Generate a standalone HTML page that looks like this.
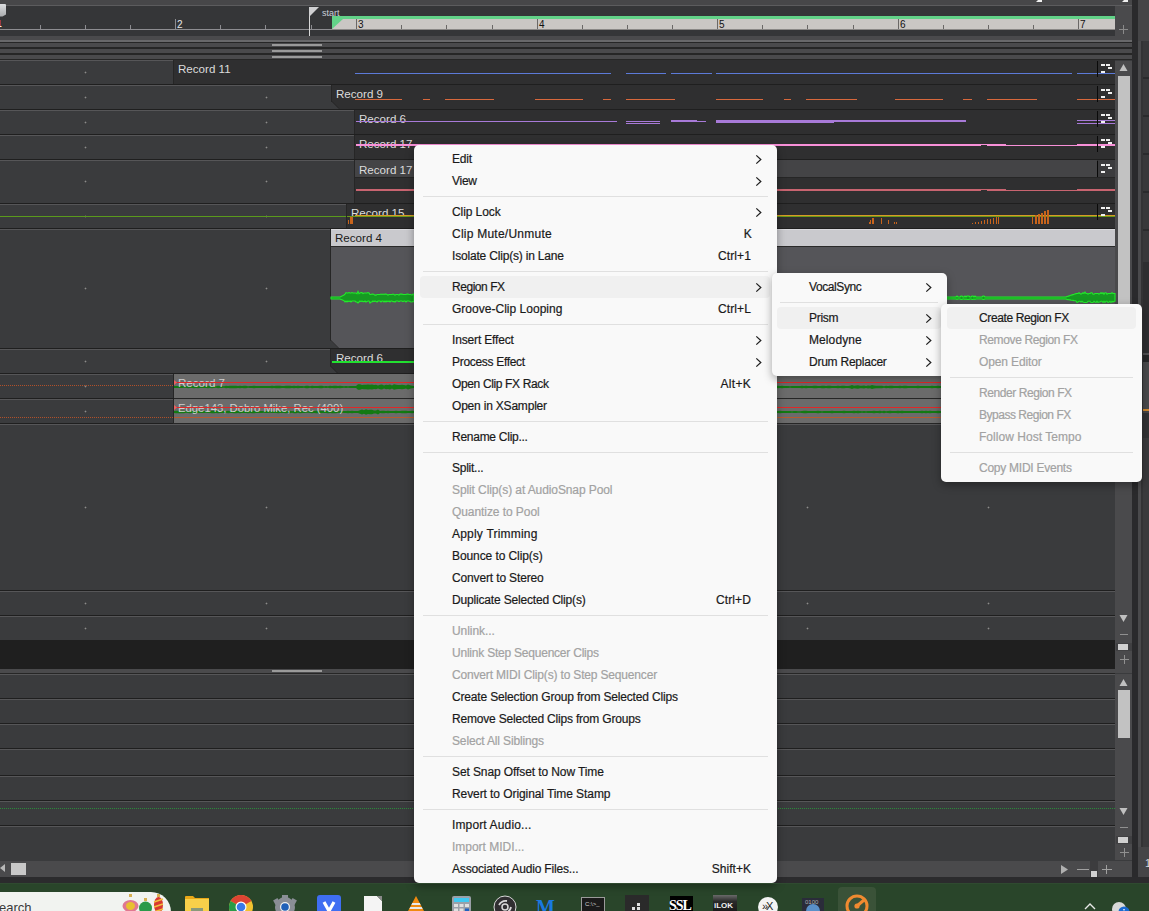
<!DOCTYPE html><html><head><meta charset="utf-8"><style>html,body{margin:0;padding:0;width:1149px;height:911px;overflow:hidden;background:#3a3b3d}body>div,body>span,body>svg{position:absolute}.t{position:absolute;font-family:"Liberation Sans",sans-serif;white-space:nowrap;line-height:1}.m{font-size:12px;letter-spacing:-0.17px;-webkit-text-stroke:0.2px currentColor}</style></head><body><div style="left:0px;top:0px;width:1149px;height:5px;background:#474749;"></div>
<div style="left:0px;top:5px;width:1132px;height:1px;background:#5c5c5e;"></div>
<div style="left:0px;top:6px;width:1115px;height:30px;background:#353638;"></div>
<div style="left:1115px;top:6px;width:17px;height:30px;background:#4a4a4c;"></div>
<div style="left:1119px;top:29px;width:9px;height:1px;background:#8a8a8a;"></div>
<div style="left:1123px;top:25px;width:1px;height:9px;background:#8a8a8a;"></div>
<div style="left:0px;top:29px;width:332px;height:1px;background:#8d8d91;"></div>
<div style="left:332px;top:16px;width:783px;height:3px;background:#62d288;"></div>
<div style="left:332px;top:19px;width:783px;height:10px;background:#cac7c4;"></div>
<div style="left:332px;top:29px;width:783px;height:1px;background:#8a8886;"></div>
<svg style="position:absolute;left:332px;top:19px" width="12" height="11"><polygon points="0,0 11,0 0,10" fill="#62d288"/></svg>
<div style="left:40px;top:25px;width:1px;height:4px;background:#8d8d91;"></div>
<div style="left:85px;top:25px;width:1px;height:4px;background:#8d8d91;"></div>
<div style="left:130px;top:25px;width:1px;height:4px;background:#8d8d91;"></div>
<div style="left:175px;top:19px;width:1px;height:10px;background:#8d8d91;"></div>
<div style="left:220px;top:25px;width:1px;height:4px;background:#8d8d91;"></div>
<div style="left:265px;top:25px;width:1px;height:4px;background:#8d8d91;"></div>
<div style="left:311px;top:25px;width:1px;height:4px;background:#8d8d91;"></div>
<span class="t" style="left:177px;top:19px;font-size:10px;color:#e8e8e8;line-height:12px">2</span>
<div style="left:356px;top:19px;width:1px;height:10px;background:#6a6866;"></div>
<div style="left:401px;top:25px;width:1px;height:4px;background:#6a6866;"></div>
<div style="left:446px;top:25px;width:1px;height:4px;background:#6a6866;"></div>
<div style="left:492px;top:25px;width:1px;height:4px;background:#6a6866;"></div>
<span class="t" style="left:358px;top:19px;font-size:10px;color:#111;line-height:12px">3</span>
<div style="left:537px;top:19px;width:1px;height:10px;background:#6a6866;"></div>
<div style="left:582px;top:25px;width:1px;height:4px;background:#6a6866;"></div>
<div style="left:627px;top:25px;width:1px;height:4px;background:#6a6866;"></div>
<div style="left:672px;top:25px;width:1px;height:4px;background:#6a6866;"></div>
<span class="t" style="left:539px;top:19px;font-size:10px;color:#111;line-height:12px">4</span>
<div style="left:717px;top:19px;width:1px;height:10px;background:#6a6866;"></div>
<div style="left:762px;top:25px;width:1px;height:4px;background:#6a6866;"></div>
<div style="left:807px;top:25px;width:1px;height:4px;background:#6a6866;"></div>
<div style="left:853px;top:25px;width:1px;height:4px;background:#6a6866;"></div>
<span class="t" style="left:719px;top:19px;font-size:10px;color:#111;line-height:12px">5</span>
<div style="left:898px;top:19px;width:1px;height:10px;background:#6a6866;"></div>
<div style="left:943px;top:25px;width:1px;height:4px;background:#6a6866;"></div>
<div style="left:988px;top:25px;width:1px;height:4px;background:#6a6866;"></div>
<div style="left:1033px;top:25px;width:1px;height:4px;background:#6a6866;"></div>
<span class="t" style="left:900px;top:19px;font-size:10px;color:#111;line-height:12px">6</span>
<div style="left:1078px;top:19px;width:1px;height:10px;background:#6a6866;"></div>
<span class="t" style="left:1080px;top:19px;font-size:10px;color:#111;line-height:12px">7</span>
<div style="left:0px;top:20px;width:1px;height:6px;background:#a03a40;"></div>
<div style="left:0px;top:26px;width:1px;height:1px;background:#f0f0f0;"></div>
<div style="left:1px;top:26px;width:1px;height:1px;background:#e89040;"></div>
<svg style="position:absolute;left:0;top:3px" width="8" height="16"><defs><linearGradient id="pg" x1="0" y1="0" x2="0" y2="1"><stop offset="0" stop-color="#dcdee0"/><stop offset="1" stop-color="#a9abae"/></linearGradient></defs><path d="M0 1 H5 Q6 1 6 2 V11.5 L2.5 13.5 H0 Z" fill="url(#pg)"/></svg>
<div style="left:309px;top:7px;width:1px;height:29px;background:#d8d8d8;"></div>
<svg style="position:absolute;left:309px;top:7px" width="12" height="11"><polygon points="0,0 10,0 0,10" fill="#d0d0d2"/></svg>
<span class="t" style="left:322px;top:8px;font-size:9px;color:#c9cfda;line-height:11px">start</span>
<div style="left:0px;top:36px;width:1132px;height:4px;background:#4a4a4c;"></div>
<div style="left:0px;top:40px;width:1132px;height:2px;background:#68686a;"></div>
<div style="left:0px;top:42px;width:1132px;height:1px;background:#262626;"></div>
<div style="left:0px;top:43px;width:1132px;height:4px;background:#4a4a4c;"></div>
<div style="left:0px;top:47px;width:1132px;height:2px;background:#262626;"></div>
<div style="left:0px;top:49px;width:1132px;height:4px;background:#4a4a4c;"></div>
<div style="left:0px;top:53px;width:1132px;height:2px;background:#262626;"></div>
<div style="left:0px;top:55px;width:1132px;height:4px;background:#4a4a4c;"></div>
<div style="left:0px;top:59px;width:1132px;height:1px;background:#262626;"></div>
<div style="left:0px;top:60px;width:1115px;height:1px;background:#565658;"></div>
<div style="left:272px;top:44px;width:50px;height:2px;background:#9a9a9a;"></div>
<div style="left:272px;top:50px;width:50px;height:2px;background:#9a9a9a;"></div>
<div style="left:272px;top:56px;width:50px;height:2px;background:#9a9a9a;"></div>
<div style="left:0px;top:61px;width:1115px;height:579px;background:#3a3b3d;"></div>
<div style="left:0px;top:84px;width:1115px;height:1px;background:#1f1f1f;"></div>
<div style="left:0px;top:85px;width:1115px;height:1px;background:#565658;"></div>
<div style="left:0px;top:109px;width:1115px;height:1px;background:#1f1f1f;"></div>
<div style="left:0px;top:110px;width:1115px;height:1px;background:#565658;"></div>
<div style="left:0px;top:134px;width:1115px;height:1px;background:#1f1f1f;"></div>
<div style="left:0px;top:135px;width:1115px;height:1px;background:#565658;"></div>
<div style="left:0px;top:159px;width:1115px;height:1px;background:#1f1f1f;"></div>
<div style="left:0px;top:160px;width:1115px;height:1px;background:#565658;"></div>
<div style="left:0px;top:203px;width:1115px;height:1px;background:#1f1f1f;"></div>
<div style="left:0px;top:204px;width:1115px;height:1px;background:#565658;"></div>
<div style="left:0px;top:228px;width:1115px;height:1px;background:#1f1f1f;"></div>
<div style="left:0px;top:229px;width:1115px;height:1px;background:#565658;"></div>
<div style="left:0px;top:348px;width:1115px;height:1px;background:#1f1f1f;"></div>
<div style="left:0px;top:349px;width:1115px;height:1px;background:#565658;"></div>
<div style="left:0px;top:373px;width:1115px;height:1px;background:#1f1f1f;"></div>
<div style="left:0px;top:374px;width:1115px;height:1px;background:#565658;"></div>
<div style="left:0px;top:398px;width:1115px;height:1px;background:#1f1f1f;"></div>
<div style="left:0px;top:399px;width:1115px;height:1px;background:#565658;"></div>
<div style="left:0px;top:423px;width:1115px;height:1px;background:#1f1f1f;"></div>
<div style="left:0px;top:424px;width:1115px;height:1px;background:#565658;"></div>
<div style="left:0px;top:590px;width:1115px;height:1px;background:#1f1f1f;"></div>
<div style="left:0px;top:591px;width:1115px;height:1px;background:#565658;"></div>
<div style="left:0px;top:615px;width:1115px;height:1px;background:#1f1f1f;"></div>
<div style="left:0px;top:616px;width:1115px;height:1px;background:#565658;"></div>
<div style="left:84px;top:72px;width:3px;height:1px;background:#555;"></div>
<div style="left:85px;top:71px;width:1px;height:3px;background:#555;"></div>
<div style="left:85px;top:72px;width:1px;height:1px;background:#8c8c8c;"></div>
<div style="left:265px;top:72px;width:3px;height:1px;background:#555;"></div>
<div style="left:266px;top:71px;width:1px;height:3px;background:#555;"></div>
<div style="left:266px;top:72px;width:1px;height:1px;background:#8c8c8c;"></div>
<div style="left:445px;top:72px;width:3px;height:1px;background:#555;"></div>
<div style="left:446px;top:71px;width:1px;height:3px;background:#555;"></div>
<div style="left:446px;top:72px;width:1px;height:1px;background:#8c8c8c;"></div>
<div style="left:626px;top:72px;width:3px;height:1px;background:#555;"></div>
<div style="left:627px;top:71px;width:1px;height:3px;background:#555;"></div>
<div style="left:627px;top:72px;width:1px;height:1px;background:#8c8c8c;"></div>
<div style="left:806px;top:72px;width:3px;height:1px;background:#555;"></div>
<div style="left:807px;top:71px;width:1px;height:3px;background:#555;"></div>
<div style="left:807px;top:72px;width:1px;height:1px;background:#8c8c8c;"></div>
<div style="left:987px;top:72px;width:3px;height:1px;background:#555;"></div>
<div style="left:988px;top:71px;width:1px;height:3px;background:#555;"></div>
<div style="left:988px;top:72px;width:1px;height:1px;background:#8c8c8c;"></div>
<div style="left:84px;top:97px;width:3px;height:1px;background:#555;"></div>
<div style="left:85px;top:96px;width:1px;height:3px;background:#555;"></div>
<div style="left:85px;top:97px;width:1px;height:1px;background:#8c8c8c;"></div>
<div style="left:265px;top:97px;width:3px;height:1px;background:#555;"></div>
<div style="left:266px;top:96px;width:1px;height:3px;background:#555;"></div>
<div style="left:266px;top:97px;width:1px;height:1px;background:#8c8c8c;"></div>
<div style="left:445px;top:97px;width:3px;height:1px;background:#555;"></div>
<div style="left:446px;top:96px;width:1px;height:3px;background:#555;"></div>
<div style="left:446px;top:97px;width:1px;height:1px;background:#8c8c8c;"></div>
<div style="left:626px;top:97px;width:3px;height:1px;background:#555;"></div>
<div style="left:627px;top:96px;width:1px;height:3px;background:#555;"></div>
<div style="left:627px;top:97px;width:1px;height:1px;background:#8c8c8c;"></div>
<div style="left:806px;top:97px;width:3px;height:1px;background:#555;"></div>
<div style="left:807px;top:96px;width:1px;height:3px;background:#555;"></div>
<div style="left:807px;top:97px;width:1px;height:1px;background:#8c8c8c;"></div>
<div style="left:987px;top:97px;width:3px;height:1px;background:#555;"></div>
<div style="left:988px;top:96px;width:1px;height:3px;background:#555;"></div>
<div style="left:988px;top:97px;width:1px;height:1px;background:#8c8c8c;"></div>
<div style="left:84px;top:122px;width:3px;height:1px;background:#555;"></div>
<div style="left:85px;top:121px;width:1px;height:3px;background:#555;"></div>
<div style="left:85px;top:122px;width:1px;height:1px;background:#8c8c8c;"></div>
<div style="left:265px;top:122px;width:3px;height:1px;background:#555;"></div>
<div style="left:266px;top:121px;width:1px;height:3px;background:#555;"></div>
<div style="left:266px;top:122px;width:1px;height:1px;background:#8c8c8c;"></div>
<div style="left:445px;top:122px;width:3px;height:1px;background:#555;"></div>
<div style="left:446px;top:121px;width:1px;height:3px;background:#555;"></div>
<div style="left:446px;top:122px;width:1px;height:1px;background:#8c8c8c;"></div>
<div style="left:626px;top:122px;width:3px;height:1px;background:#555;"></div>
<div style="left:627px;top:121px;width:1px;height:3px;background:#555;"></div>
<div style="left:627px;top:122px;width:1px;height:1px;background:#8c8c8c;"></div>
<div style="left:806px;top:122px;width:3px;height:1px;background:#555;"></div>
<div style="left:807px;top:121px;width:1px;height:3px;background:#555;"></div>
<div style="left:807px;top:122px;width:1px;height:1px;background:#8c8c8c;"></div>
<div style="left:987px;top:122px;width:3px;height:1px;background:#555;"></div>
<div style="left:988px;top:121px;width:1px;height:3px;background:#555;"></div>
<div style="left:988px;top:122px;width:1px;height:1px;background:#8c8c8c;"></div>
<div style="left:84px;top:147px;width:3px;height:1px;background:#555;"></div>
<div style="left:85px;top:146px;width:1px;height:3px;background:#555;"></div>
<div style="left:85px;top:147px;width:1px;height:1px;background:#8c8c8c;"></div>
<div style="left:265px;top:147px;width:3px;height:1px;background:#555;"></div>
<div style="left:266px;top:146px;width:1px;height:3px;background:#555;"></div>
<div style="left:266px;top:147px;width:1px;height:1px;background:#8c8c8c;"></div>
<div style="left:445px;top:147px;width:3px;height:1px;background:#555;"></div>
<div style="left:446px;top:146px;width:1px;height:3px;background:#555;"></div>
<div style="left:446px;top:147px;width:1px;height:1px;background:#8c8c8c;"></div>
<div style="left:626px;top:147px;width:3px;height:1px;background:#555;"></div>
<div style="left:627px;top:146px;width:1px;height:3px;background:#555;"></div>
<div style="left:627px;top:147px;width:1px;height:1px;background:#8c8c8c;"></div>
<div style="left:806px;top:147px;width:3px;height:1px;background:#555;"></div>
<div style="left:807px;top:146px;width:1px;height:3px;background:#555;"></div>
<div style="left:807px;top:147px;width:1px;height:1px;background:#8c8c8c;"></div>
<div style="left:987px;top:147px;width:3px;height:1px;background:#555;"></div>
<div style="left:988px;top:146px;width:1px;height:3px;background:#555;"></div>
<div style="left:988px;top:147px;width:1px;height:1px;background:#8c8c8c;"></div>
<div style="left:84px;top:181px;width:3px;height:1px;background:#555;"></div>
<div style="left:85px;top:180px;width:1px;height:3px;background:#555;"></div>
<div style="left:85px;top:181px;width:1px;height:1px;background:#8c8c8c;"></div>
<div style="left:265px;top:181px;width:3px;height:1px;background:#555;"></div>
<div style="left:266px;top:180px;width:1px;height:3px;background:#555;"></div>
<div style="left:266px;top:181px;width:1px;height:1px;background:#8c8c8c;"></div>
<div style="left:445px;top:181px;width:3px;height:1px;background:#555;"></div>
<div style="left:446px;top:180px;width:1px;height:3px;background:#555;"></div>
<div style="left:446px;top:181px;width:1px;height:1px;background:#8c8c8c;"></div>
<div style="left:626px;top:181px;width:3px;height:1px;background:#555;"></div>
<div style="left:627px;top:180px;width:1px;height:3px;background:#555;"></div>
<div style="left:627px;top:181px;width:1px;height:1px;background:#8c8c8c;"></div>
<div style="left:806px;top:181px;width:3px;height:1px;background:#555;"></div>
<div style="left:807px;top:180px;width:1px;height:3px;background:#555;"></div>
<div style="left:807px;top:181px;width:1px;height:1px;background:#8c8c8c;"></div>
<div style="left:987px;top:181px;width:3px;height:1px;background:#555;"></div>
<div style="left:988px;top:180px;width:1px;height:3px;background:#555;"></div>
<div style="left:988px;top:181px;width:1px;height:1px;background:#8c8c8c;"></div>
<div style="left:84px;top:216px;width:3px;height:1px;background:#555;"></div>
<div style="left:85px;top:215px;width:1px;height:3px;background:#555;"></div>
<div style="left:85px;top:216px;width:1px;height:1px;background:#8c8c8c;"></div>
<div style="left:265px;top:216px;width:3px;height:1px;background:#555;"></div>
<div style="left:266px;top:215px;width:1px;height:3px;background:#555;"></div>
<div style="left:266px;top:216px;width:1px;height:1px;background:#8c8c8c;"></div>
<div style="left:445px;top:216px;width:3px;height:1px;background:#555;"></div>
<div style="left:446px;top:215px;width:1px;height:3px;background:#555;"></div>
<div style="left:446px;top:216px;width:1px;height:1px;background:#8c8c8c;"></div>
<div style="left:626px;top:216px;width:3px;height:1px;background:#555;"></div>
<div style="left:627px;top:215px;width:1px;height:3px;background:#555;"></div>
<div style="left:627px;top:216px;width:1px;height:1px;background:#8c8c8c;"></div>
<div style="left:806px;top:216px;width:3px;height:1px;background:#555;"></div>
<div style="left:807px;top:215px;width:1px;height:3px;background:#555;"></div>
<div style="left:807px;top:216px;width:1px;height:1px;background:#8c8c8c;"></div>
<div style="left:987px;top:216px;width:3px;height:1px;background:#555;"></div>
<div style="left:988px;top:215px;width:1px;height:3px;background:#555;"></div>
<div style="left:988px;top:216px;width:1px;height:1px;background:#8c8c8c;"></div>
<div style="left:84px;top:288px;width:3px;height:1px;background:#555;"></div>
<div style="left:85px;top:287px;width:1px;height:3px;background:#555;"></div>
<div style="left:85px;top:288px;width:1px;height:1px;background:#8c8c8c;"></div>
<div style="left:265px;top:288px;width:3px;height:1px;background:#555;"></div>
<div style="left:266px;top:287px;width:1px;height:3px;background:#555;"></div>
<div style="left:266px;top:288px;width:1px;height:1px;background:#8c8c8c;"></div>
<div style="left:445px;top:288px;width:3px;height:1px;background:#555;"></div>
<div style="left:446px;top:287px;width:1px;height:3px;background:#555;"></div>
<div style="left:446px;top:288px;width:1px;height:1px;background:#8c8c8c;"></div>
<div style="left:626px;top:288px;width:3px;height:1px;background:#555;"></div>
<div style="left:627px;top:287px;width:1px;height:3px;background:#555;"></div>
<div style="left:627px;top:288px;width:1px;height:1px;background:#8c8c8c;"></div>
<div style="left:806px;top:288px;width:3px;height:1px;background:#555;"></div>
<div style="left:807px;top:287px;width:1px;height:3px;background:#555;"></div>
<div style="left:807px;top:288px;width:1px;height:1px;background:#8c8c8c;"></div>
<div style="left:987px;top:288px;width:3px;height:1px;background:#555;"></div>
<div style="left:988px;top:287px;width:1px;height:3px;background:#555;"></div>
<div style="left:988px;top:288px;width:1px;height:1px;background:#8c8c8c;"></div>
<div style="left:84px;top:361px;width:3px;height:1px;background:#555;"></div>
<div style="left:85px;top:360px;width:1px;height:3px;background:#555;"></div>
<div style="left:85px;top:361px;width:1px;height:1px;background:#8c8c8c;"></div>
<div style="left:265px;top:361px;width:3px;height:1px;background:#555;"></div>
<div style="left:266px;top:360px;width:1px;height:3px;background:#555;"></div>
<div style="left:266px;top:361px;width:1px;height:1px;background:#8c8c8c;"></div>
<div style="left:445px;top:361px;width:3px;height:1px;background:#555;"></div>
<div style="left:446px;top:360px;width:1px;height:3px;background:#555;"></div>
<div style="left:446px;top:361px;width:1px;height:1px;background:#8c8c8c;"></div>
<div style="left:626px;top:361px;width:3px;height:1px;background:#555;"></div>
<div style="left:627px;top:360px;width:1px;height:3px;background:#555;"></div>
<div style="left:627px;top:361px;width:1px;height:1px;background:#8c8c8c;"></div>
<div style="left:806px;top:361px;width:3px;height:1px;background:#555;"></div>
<div style="left:807px;top:360px;width:1px;height:3px;background:#555;"></div>
<div style="left:807px;top:361px;width:1px;height:1px;background:#8c8c8c;"></div>
<div style="left:987px;top:361px;width:3px;height:1px;background:#555;"></div>
<div style="left:988px;top:360px;width:1px;height:3px;background:#555;"></div>
<div style="left:988px;top:361px;width:1px;height:1px;background:#8c8c8c;"></div>
<div style="left:84px;top:386px;width:3px;height:1px;background:#555;"></div>
<div style="left:85px;top:385px;width:1px;height:3px;background:#555;"></div>
<div style="left:85px;top:386px;width:1px;height:1px;background:#8c8c8c;"></div>
<div style="left:265px;top:386px;width:3px;height:1px;background:#555;"></div>
<div style="left:266px;top:385px;width:1px;height:3px;background:#555;"></div>
<div style="left:266px;top:386px;width:1px;height:1px;background:#8c8c8c;"></div>
<div style="left:445px;top:386px;width:3px;height:1px;background:#555;"></div>
<div style="left:446px;top:385px;width:1px;height:3px;background:#555;"></div>
<div style="left:446px;top:386px;width:1px;height:1px;background:#8c8c8c;"></div>
<div style="left:626px;top:386px;width:3px;height:1px;background:#555;"></div>
<div style="left:627px;top:385px;width:1px;height:3px;background:#555;"></div>
<div style="left:627px;top:386px;width:1px;height:1px;background:#8c8c8c;"></div>
<div style="left:806px;top:386px;width:3px;height:1px;background:#555;"></div>
<div style="left:807px;top:385px;width:1px;height:3px;background:#555;"></div>
<div style="left:807px;top:386px;width:1px;height:1px;background:#8c8c8c;"></div>
<div style="left:987px;top:386px;width:3px;height:1px;background:#555;"></div>
<div style="left:988px;top:385px;width:1px;height:3px;background:#555;"></div>
<div style="left:988px;top:386px;width:1px;height:1px;background:#8c8c8c;"></div>
<div style="left:84px;top:411px;width:3px;height:1px;background:#555;"></div>
<div style="left:85px;top:410px;width:1px;height:3px;background:#555;"></div>
<div style="left:85px;top:411px;width:1px;height:1px;background:#8c8c8c;"></div>
<div style="left:265px;top:411px;width:3px;height:1px;background:#555;"></div>
<div style="left:266px;top:410px;width:1px;height:3px;background:#555;"></div>
<div style="left:266px;top:411px;width:1px;height:1px;background:#8c8c8c;"></div>
<div style="left:445px;top:411px;width:3px;height:1px;background:#555;"></div>
<div style="left:446px;top:410px;width:1px;height:3px;background:#555;"></div>
<div style="left:446px;top:411px;width:1px;height:1px;background:#8c8c8c;"></div>
<div style="left:626px;top:411px;width:3px;height:1px;background:#555;"></div>
<div style="left:627px;top:410px;width:1px;height:3px;background:#555;"></div>
<div style="left:627px;top:411px;width:1px;height:1px;background:#8c8c8c;"></div>
<div style="left:806px;top:411px;width:3px;height:1px;background:#555;"></div>
<div style="left:807px;top:410px;width:1px;height:3px;background:#555;"></div>
<div style="left:807px;top:411px;width:1px;height:1px;background:#8c8c8c;"></div>
<div style="left:987px;top:411px;width:3px;height:1px;background:#555;"></div>
<div style="left:988px;top:410px;width:1px;height:3px;background:#555;"></div>
<div style="left:988px;top:411px;width:1px;height:1px;background:#8c8c8c;"></div>
<div style="left:84px;top:507px;width:3px;height:1px;background:#555;"></div>
<div style="left:85px;top:506px;width:1px;height:3px;background:#555;"></div>
<div style="left:85px;top:507px;width:1px;height:1px;background:#8c8c8c;"></div>
<div style="left:265px;top:507px;width:3px;height:1px;background:#555;"></div>
<div style="left:266px;top:506px;width:1px;height:3px;background:#555;"></div>
<div style="left:266px;top:507px;width:1px;height:1px;background:#8c8c8c;"></div>
<div style="left:445px;top:507px;width:3px;height:1px;background:#555;"></div>
<div style="left:446px;top:506px;width:1px;height:3px;background:#555;"></div>
<div style="left:446px;top:507px;width:1px;height:1px;background:#8c8c8c;"></div>
<div style="left:626px;top:507px;width:3px;height:1px;background:#555;"></div>
<div style="left:627px;top:506px;width:1px;height:3px;background:#555;"></div>
<div style="left:627px;top:507px;width:1px;height:1px;background:#8c8c8c;"></div>
<div style="left:806px;top:507px;width:3px;height:1px;background:#555;"></div>
<div style="left:807px;top:506px;width:1px;height:3px;background:#555;"></div>
<div style="left:807px;top:507px;width:1px;height:1px;background:#8c8c8c;"></div>
<div style="left:987px;top:507px;width:3px;height:1px;background:#555;"></div>
<div style="left:988px;top:506px;width:1px;height:3px;background:#555;"></div>
<div style="left:988px;top:507px;width:1px;height:1px;background:#8c8c8c;"></div>
<div style="left:84px;top:603px;width:3px;height:1px;background:#555;"></div>
<div style="left:85px;top:602px;width:1px;height:3px;background:#555;"></div>
<div style="left:85px;top:603px;width:1px;height:1px;background:#8c8c8c;"></div>
<div style="left:265px;top:603px;width:3px;height:1px;background:#555;"></div>
<div style="left:266px;top:602px;width:1px;height:3px;background:#555;"></div>
<div style="left:266px;top:603px;width:1px;height:1px;background:#8c8c8c;"></div>
<div style="left:445px;top:603px;width:3px;height:1px;background:#555;"></div>
<div style="left:446px;top:602px;width:1px;height:3px;background:#555;"></div>
<div style="left:446px;top:603px;width:1px;height:1px;background:#8c8c8c;"></div>
<div style="left:626px;top:603px;width:3px;height:1px;background:#555;"></div>
<div style="left:627px;top:602px;width:1px;height:3px;background:#555;"></div>
<div style="left:627px;top:603px;width:1px;height:1px;background:#8c8c8c;"></div>
<div style="left:806px;top:603px;width:3px;height:1px;background:#555;"></div>
<div style="left:807px;top:602px;width:1px;height:3px;background:#555;"></div>
<div style="left:807px;top:603px;width:1px;height:1px;background:#8c8c8c;"></div>
<div style="left:987px;top:603px;width:3px;height:1px;background:#555;"></div>
<div style="left:988px;top:602px;width:1px;height:3px;background:#555;"></div>
<div style="left:988px;top:603px;width:1px;height:1px;background:#8c8c8c;"></div>
<div style="left:84px;top:628px;width:3px;height:1px;background:#555;"></div>
<div style="left:85px;top:627px;width:1px;height:3px;background:#555;"></div>
<div style="left:85px;top:628px;width:1px;height:1px;background:#8c8c8c;"></div>
<div style="left:265px;top:628px;width:3px;height:1px;background:#555;"></div>
<div style="left:266px;top:627px;width:1px;height:3px;background:#555;"></div>
<div style="left:266px;top:628px;width:1px;height:1px;background:#8c8c8c;"></div>
<div style="left:445px;top:628px;width:3px;height:1px;background:#555;"></div>
<div style="left:446px;top:627px;width:1px;height:3px;background:#555;"></div>
<div style="left:446px;top:628px;width:1px;height:1px;background:#8c8c8c;"></div>
<div style="left:626px;top:628px;width:3px;height:1px;background:#555;"></div>
<div style="left:627px;top:627px;width:1px;height:3px;background:#555;"></div>
<div style="left:627px;top:628px;width:1px;height:1px;background:#8c8c8c;"></div>
<div style="left:806px;top:628px;width:3px;height:1px;background:#555;"></div>
<div style="left:807px;top:627px;width:1px;height:3px;background:#555;"></div>
<div style="left:807px;top:628px;width:1px;height:1px;background:#8c8c8c;"></div>
<div style="left:987px;top:628px;width:3px;height:1px;background:#555;"></div>
<div style="left:988px;top:627px;width:1px;height:3px;background:#555;"></div>
<div style="left:988px;top:628px;width:1px;height:1px;background:#8c8c8c;"></div>
<div style="left:0px;top:640px;width:1115px;height:29px;background:#1f1f1f;"></div>
<div style="left:0px;top:669px;width:1132px;height:4px;background:#4a4a4c;"></div>
<div style="left:272px;top:670px;width:50px;height:2px;background:#9a9a9a;"></div>
<div style="left:0px;top:673px;width:1115px;height:1px;background:#262626;"></div>
<div style="left:0px;top:674px;width:1115px;height:1px;background:#565658;"></div>
<div style="left:0px;top:675px;width:1115px;height:186px;background:#3a3b3d;"></div>
<div style="left:0px;top:698px;width:1115px;height:1px;background:#1f1f1f;"></div>
<div style="left:0px;top:699px;width:1115px;height:1px;background:#565658;"></div>
<div style="left:0px;top:723px;width:1115px;height:1px;background:#1f1f1f;"></div>
<div style="left:0px;top:724px;width:1115px;height:1px;background:#565658;"></div>
<div style="left:0px;top:748px;width:1115px;height:1px;background:#1f1f1f;"></div>
<div style="left:0px;top:749px;width:1115px;height:1px;background:#565658;"></div>
<div style="left:0px;top:775px;width:1115px;height:1px;background:#1f1f1f;"></div>
<div style="left:0px;top:776px;width:1115px;height:1px;background:#565658;"></div>
<div style="left:0px;top:800px;width:1115px;height:1px;background:#1f1f1f;"></div>
<div style="left:0px;top:801px;width:1115px;height:1px;background:#565658;"></div>
<div style="left:0px;top:825px;width:1115px;height:1px;background:#1f1f1f;"></div>
<div style="left:0px;top:826px;width:1115px;height:1px;background:#565658;"></div>
<div style="left:0;top:808px;width:1115px;height:1px;background:repeating-linear-gradient(90deg,#2a8a3a 0 1px,transparent 1px 2px)"></div>
<div style="left:0px;top:861px;width:1115px;height:16px;background:#4a4a4c;"></div>
<div style="left:1115px;top:861px;width:17px;height:16px;background:#4a4a4c;"></div>
<svg style="position:absolute;left:0;top:863px" width="8" height="10"><polygon points="5,1 5,9 0,5" fill="#b8b8b8"/></svg>
<div style="left:11px;top:863px;width:15px;height:12px;background:#c8c8c8;"></div>
<svg style="position:absolute;left:1060px;top:864px" width="10" height="11"><polygon points="1,1 8,5.5 1,10" fill="#b0b0b0"/></svg>
<div style="left:1077px;top:869px;width:12px;height:1px;background:#a0a0a0;"></div>
<div style="left:1090px;top:861px;width:8px;height:16px;background:#3c3c3e;"></div>
<div style="left:1091px;top:871px;width:6px;height:6px;background:#d0d0d0;"></div>
<div style="left:1102px;top:869px;width:10px;height:1px;background:#a0a0a0;"></div>
<div style="left:1106px;top:865px;width:1px;height:9px;background:#a0a0a0;"></div>
<div style="left:0px;top:877px;width:1132px;height:6px;background:#2b2b2d;"></div>
<div style="left:1115px;top:61px;width:17px;height:608px;background:#4a4a4c;"></div>
<svg style="position:absolute;left:1117px;top:62px" width="13" height="10"><polygon points="6.5,2 10.5,9 2.5,9" fill="#c0c0c0"/></svg>
<div style="left:1118px;top:76px;width:12px;height:344px;background:#c2c2c2;"></div>
<svg style="position:absolute;left:1117px;top:613px" width="13" height="10"><polygon points="2.5,2 10.5,2 6.5,9" fill="#c0c0c0"/></svg>
<div style="left:1120px;top:634px;width:8px;height:1px;background:#909090;"></div>
<div style="left:1116px;top:643px;width:16px;height:8px;background:#404042;"></div>
<div style="left:1118px;top:644px;width:10px;height:6px;background:#d0d0d0;"></div>
<div style="left:1120px;top:659px;width:9px;height:1px;background:#909090;"></div>
<div style="left:1124px;top:655px;width:1px;height:9px;background:#909090;"></div>
<div style="left:1115px;top:674px;width:17px;height:186px;background:#4a4a4c;"></div>
<svg style="position:absolute;left:1117px;top:677px" width="13" height="10"><polygon points="6.5,2 10.5,9 2.5,9" fill="#c0c0c0"/></svg>
<div style="left:1118px;top:690px;width:12px;height:48px;background:#c2c2c2;"></div>
<svg style="position:absolute;left:1117px;top:806px" width="13" height="10"><polygon points="2.5,2 10.5,2 6.5,9" fill="#c0c0c0"/></svg>
<div style="left:1120px;top:827px;width:8px;height:1px;background:#909090;"></div>
<div style="left:1116px;top:836px;width:16px;height:8px;background:#404042;"></div>
<div style="left:1118px;top:837px;width:10px;height:6px;background:#d0d0d0;"></div>
<div style="left:1120px;top:852px;width:9px;height:1px;background:#909090;"></div>
<div style="left:1124px;top:848px;width:1px;height:9px;background:#909090;"></div>
<div style="left:1132px;top:0px;width:6px;height:883px;background:#2a2a2c;"></div>
<div style="left:1138px;top:0px;width:11px;height:883px;background:#454547;"></div>
<div style="left:1138px;top:41px;width:3px;height:806px;background:#4a4a4c;"></div>
<div style="left:1141px;top:41px;width:2px;height:806px;background:#333335;"></div>
<div style="left:1143px;top:41px;width:6px;height:221px;background:#38383a;"></div>
<div style="left:1143px;top:77px;width:6px;height:2px;background:#2a2a2c;"></div>
<div style="left:1143px;top:115px;width:6px;height:2px;background:#2a2a2c;"></div>
<div style="left:1143px;top:153px;width:6px;height:2px;background:#2a2a2c;"></div>
<div style="left:1143px;top:191px;width:6px;height:2px;background:#2a2a2c;"></div>
<div style="left:1143px;top:229px;width:6px;height:2px;background:#2a2a2c;"></div>
<div style="left:1143px;top:262px;width:6px;height:91px;background:#2e2e30;"></div>
<div style="left:1143px;top:353px;width:6px;height:2px;background:#505052;"></div>
<div style="left:1143px;top:355px;width:6px;height:7px;background:#262628;"></div>
<div style="left:1143px;top:362px;width:6px;height:48px;background:#4a4a4c;"></div>
<div style="left:1143px;top:409px;width:6px;height:2px;background:#d08a30;"></div>
<div style="left:1143px;top:413px;width:6px;height:25px;background:#323234;"></div>
<div style="left:1143px;top:438px;width:6px;height:409px;background:#3a3a3c;"></div>
<svg style="position:absolute;left:1036px;top:0" width="8" height="3"><polygon points="0,2 6,2 6,-4" fill="#f0f0f0"/></svg>
<svg style="position:absolute;left:1122px;top:0" width="8" height="3"><polygon points="0,2 6,2 6,-4" fill="#f0f0f0"/></svg>
<div style="left:0px;top:877px;width:1149px;height:6px;background:#2b2b2d;"></div>
<span class="t" style="left:1145px;top:857px;font-size:11px;color:#d0d8e0;line-height:12px">1</span>
<div style="left:0px;top:883px;width:1149px;height:28px;background:#29452a;"></div>
<div style="left:173px;top:60px;width:1px;height:24px;background:#262626;"></div>
<div style="left:174px;top:60px;width:941px;height:24px;background:#2f2f30;"></div>
<span class="t" style="left:178px;top:63.38px;font-size:11.6px;color:#dcdcdc;line-height:1">Record 11</span>
<div style="left:355px;top:73px;width:256px;height:1px;background:#5c7ad8;"></div>
<div style="left:626px;top:73px;width:40px;height:1px;background:#5c7ad8;"></div>
<div style="left:671px;top:73px;width:41px;height:1px;background:#5c7ad8;"></div>
<div style="left:716px;top:73px;width:356px;height:1px;background:#5c7ad8;"></div>
<div style="left:1077px;top:73px;width:38px;height:1px;background:#5c7ad8;"></div>
<div style="left:1097px;top:61px;width:1px;height:16px;background:#0a0a0a;"></div>
<div style="left:1101px;top:64px;width:4px;height:2px;background:#f0f0f0;"></div>
<div style="left:1106px;top:64px;width:4px;height:2px;background:#f0f0f0;"></div>
<div style="left:1108px;top:67px;width:4px;height:2px;background:#f0f0f0;"></div>
<div style="left:1101px;top:71px;width:4px;height:2px;background:#f0f0f0;"></div>
<div style="left:331px;top:85px;width:784px;height:24px;background:#2f2f30;"></div>
<svg style="position:absolute;left:331px;top:101px" width="9" height="9"><polygon points="0,0 0,8 8,8" fill="#3a3b3d"/><line x1="0.5" y1="0" x2="8" y2="7.5" stroke="#262626" stroke-width="1"/></svg>
<div style="left:331px;top:85px;width:1px;height:17px;background:#262626;"></div>
<span class="t" style="left:336px;top:88.38px;font-size:11.6px;color:#dcdcdc;line-height:1">Record 9</span>
<div style="left:355px;top:99px;width:47px;height:1px;background:#d8683c;"></div>
<div style="left:423px;top:99px;width:7px;height:1px;background:#d8683c;"></div>
<div style="left:445px;top:99px;width:49px;height:1px;background:#d8683c;"></div>
<div style="left:535px;top:99px;width:48px;height:1px;background:#d8683c;"></div>
<div style="left:603px;top:99px;width:8px;height:1px;background:#d8683c;"></div>
<div style="left:626px;top:99px;width:49px;height:1px;background:#d8683c;"></div>
<div style="left:716px;top:99px;width:47px;height:1px;background:#d8683c;"></div>
<div style="left:784px;top:99px;width:7px;height:1px;background:#d8683c;"></div>
<div style="left:806px;top:99px;width:51px;height:1px;background:#d8683c;"></div>
<div style="left:895px;top:99px;width:48px;height:1px;background:#d8683c;"></div>
<div style="left:963px;top:99px;width:9px;height:1px;background:#d8683c;"></div>
<div style="left:987px;top:99px;width:50px;height:1px;background:#d8683c;"></div>
<div style="left:1077px;top:99px;width:38px;height:1px;background:#d8683c;"></div>
<div style="left:1097px;top:86px;width:1px;height:16px;background:#0a0a0a;"></div>
<div style="left:1101px;top:89px;width:4px;height:2px;background:#f0f0f0;"></div>
<div style="left:1106px;top:89px;width:4px;height:2px;background:#f0f0f0;"></div>
<div style="left:1108px;top:92px;width:4px;height:2px;background:#f0f0f0;"></div>
<div style="left:1101px;top:96px;width:4px;height:2px;background:#f0f0f0;"></div>
<div style="left:354px;top:110px;width:1px;height:24px;background:#262626;"></div>
<div style="left:355px;top:110px;width:760px;height:24px;background:#2f2f30;"></div>
<span class="t" style="left:359px;top:113.38px;font-size:11.6px;color:#dcdcdc;line-height:1">Record 6</span>
<div style="left:356px;top:121px;width:261px;height:1px;background:#a87ad8;"></div>
<div style="left:671px;top:121px;width:35px;height:1px;background:#a87ad8;"></div>
<div style="left:834px;top:120px;width:132px;height:2px;background:#a87ad8;"></div>
<div style="left:671px;top:120px;width:26px;height:2px;background:#a87ad8;"></div>
<div style="left:626px;top:121px;width:34px;height:1px;background:#a87ad8;"></div>
<div style="left:626px;top:123px;width:34px;height:1px;background:#a87ad8;"></div>
<div style="left:716px;top:120px;width:118px;height:3px;background:#a87ad8;"></div>
<div style="left:1077px;top:120px;width:38px;height:1px;background:#a87ad8;"></div>
<div style="left:1077px;top:123px;width:38px;height:1px;background:#a87ad8;"></div>
<div style="left:1097px;top:111px;width:1px;height:16px;background:#0a0a0a;"></div>
<div style="left:1101px;top:114px;width:4px;height:2px;background:#f0f0f0;"></div>
<div style="left:1106px;top:114px;width:4px;height:2px;background:#f0f0f0;"></div>
<div style="left:1108px;top:117px;width:4px;height:2px;background:#f0f0f0;"></div>
<div style="left:1101px;top:121px;width:4px;height:2px;background:#f0f0f0;"></div>
<div style="left:354px;top:135px;width:1px;height:24px;background:#262626;"></div>
<div style="left:355px;top:135px;width:760px;height:24px;background:#2f2f30;"></div>
<span class="t" style="left:359px;top:138.38px;font-size:11.6px;color:#dcdcdc;line-height:1">Record 17</span>
<div style="left:356px;top:144px;width:759px;height:2px;background:#f890d8;"></div>
<div style="left:1006px;top:144px;width:71px;height:1px;background:#2f2f30;"></div>
<div style="left:981px;top:145px;width:6px;height:1px;background:#2f2f30;"></div>
<div style="left:1097px;top:136px;width:1px;height:16px;background:#0a0a0a;"></div>
<div style="left:1101px;top:139px;width:4px;height:2px;background:#f0f0f0;"></div>
<div style="left:1106px;top:139px;width:4px;height:2px;background:#f0f0f0;"></div>
<div style="left:1108px;top:142px;width:4px;height:2px;background:#f0f0f0;"></div>
<div style="left:1101px;top:146px;width:4px;height:2px;background:#f0f0f0;"></div>
<div style="left:354px;top:160px;width:1px;height:43px;background:#262626;"></div>
<div style="left:355px;top:160px;width:760px;height:43px;background:#2f2f30;"></div>
<div style="left:355px;top:160px;width:742px;height:17px;background:#444446;"></div>
<div style="left:1098px;top:160px;width:17px;height:17px;background:#3c3c3e;"></div>
<div style="left:355px;top:177px;width:760px;height:1px;background:#262626;"></div>
<span class="t" style="left:359px;top:163.68px;font-size:11.6px;color:#dcdcdc;line-height:1">Record 17</span>
<div style="left:356px;top:189px;width:759px;height:2px;background:#c86470;"></div>
<div style="left:1006px;top:189px;width:71px;height:1px;background:#2f2f30;"></div>
<div style="left:981px;top:190px;width:6px;height:1px;background:#2f2f30;"></div>
<div style="left:1097px;top:161px;width:1px;height:16px;background:#0a0a0a;"></div>
<div style="left:1101px;top:164px;width:4px;height:2px;background:#f0f0f0;"></div>
<div style="left:1106px;top:164px;width:4px;height:2px;background:#f0f0f0;"></div>
<div style="left:1108px;top:167px;width:4px;height:2px;background:#f0f0f0;"></div>
<div style="left:1101px;top:171px;width:4px;height:2px;background:#f0f0f0;"></div>
<div style="left:346px;top:204px;width:1px;height:24px;background:#262626;"></div>
<div style="left:347px;top:204px;width:768px;height:24px;background:#2f2f30;"></div>
<div style="left:0px;top:216px;width:346px;height:1px;background:#5a9a1c;"></div>
<span class="t" style="left:351px;top:207.38px;font-size:11.6px;color:#dcdcdc;line-height:1">Record 15</span>
<div style="left:355px;top:215px;width:760px;height:1px;background:#d89a28;"></div>
<div style="left:347px;top:216px;width:768px;height:1px;background:#6a9a18;"></div>
<div style="left:348px;top:220px;width:1px;height:4px;background:#c8641c;"></div>
<div style="left:350px;top:217px;width:1px;height:7px;background:#c8641c;"></div>
<div style="left:351px;top:217px;width:1px;height:7px;background:#c8641c;"></div>
<div style="left:352px;top:217px;width:1px;height:7px;background:#c8641c;"></div>
<div style="left:869px;top:222px;width:1px;height:2px;background:#c8641c;"></div>
<div style="left:870px;top:220px;width:1px;height:4px;background:#c8641c;"></div>
<div style="left:872px;top:218px;width:1px;height:6px;background:#c8641c;"></div>
<div style="left:873px;top:218px;width:1px;height:6px;background:#c8641c;"></div>
<div style="left:881px;top:218px;width:1px;height:6px;background:#c8641c;"></div>
<div style="left:888px;top:220px;width:1px;height:4px;background:#c8641c;"></div>
<div style="left:894px;top:222px;width:1px;height:2px;background:#c8641c;"></div>
<div style="left:896px;top:222px;width:1px;height:2px;background:#c8641c;"></div>
<div style="left:972px;top:223px;width:1px;height:1px;background:#c8641c;"></div>
<div style="left:975px;top:222px;width:1px;height:2px;background:#c8641c;"></div>
<div style="left:978px;top:222px;width:1px;height:2px;background:#c8641c;"></div>
<div style="left:981px;top:221px;width:1px;height:3px;background:#c8641c;"></div>
<div style="left:984px;top:220px;width:1px;height:4px;background:#c8641c;"></div>
<div style="left:987px;top:219px;width:1px;height:5px;background:#c8641c;"></div>
<div style="left:990px;top:219px;width:1px;height:5px;background:#c8641c;"></div>
<div style="left:993px;top:218px;width:1px;height:6px;background:#c8641c;"></div>
<div style="left:996px;top:217px;width:1px;height:7px;background:#c8641c;"></div>
<div style="left:998px;top:217px;width:1px;height:7px;background:#c8641c;"></div>
<div style="left:1032px;top:217px;width:1px;height:7px;background:#c8641c;"></div>
<div style="left:1035px;top:215px;width:2px;height:9px;background:#c8641c;"></div>
<div style="left:1038px;top:214px;width:2px;height:10px;background:#c8641c;"></div>
<div style="left:1041px;top:213px;width:2px;height:11px;background:#c8641c;"></div>
<div style="left:1044px;top:211px;width:2px;height:13px;background:#c8641c;"></div>
<div style="left:1047px;top:210px;width:2px;height:14px;background:#c8641c;"></div>
<div style="left:1097px;top:204px;width:1px;height:16px;background:#0a0a0a;"></div>
<div style="left:1101px;top:207px;width:4px;height:2px;background:#f0f0f0;"></div>
<div style="left:1106px;top:207px;width:4px;height:2px;background:#f0f0f0;"></div>
<div style="left:1108px;top:210px;width:4px;height:2px;background:#f0f0f0;"></div>
<div style="left:1101px;top:214px;width:4px;height:2px;background:#f0f0f0;"></div>
<div style="left:330px;top:229px;width:1px;height:119px;background:#262626;"></div>
<div style="left:331px;top:229px;width:784px;height:17px;background:#c9c9cd;"></div>
<div style="left:331px;top:229px;width:784px;height:1px;background:#dadade;"></div>
<div style="left:331px;top:247px;width:784px;height:101px;background:#555559;"></div>
<div style="left:331px;top:246px;width:784px;height:1px;background:#2a2a2a;"></div>
<svg style="position:absolute;left:330px;top:340px" width="10" height="9"><polygon points="0,0 0,8 8,8" fill="#3a3b3d"/><line x1="0.5" y1="0" x2="8.5" y2="8" stroke="#262626" stroke-width="1"/></svg>
<span class="t" style="left:335px;top:232.38px;font-size:11.6px;color:#1a1a1a;line-height:1">Record 4</span>
<svg style="position:absolute;left:0;top:0" width="1149" height="911"><path d="M331,297.0 L332,297.0 L333,297.0 L334,297.0 L335,297.0 L336,297.0 L337,297.0 L338,297.0 L339,297.0 L340,297.0 L341,296.5 L342,296.0 L343,295.5 L344,295.0 L345,294.1 L346,292.6 L347,293.0 L348,293.0 L349,292.6 L350,293.0 L351,293.0 L352,292.6 L353,293.0 L354,293.0 L355,293.0 L356,293.0 L357,293.6 L358,291.3 L359,293.6 L360,293.0 L361,292.6 L362,292.6 L363,293.6 L364,293.0 L365,293.0 L366,293.0 L367,293.0 L368,292.6 L369,293.0 L370,294.5 L371,294.5 L372,294.1 L373,294.1 L374,294.5 L375,295.1 L376,295.1 L377,294.5 L378,294.5 L379,294.5 L380,294.5 L381,294.1 L382,294.5 L383,294.1 L384,294.5 L385,294.1 L386,294.1 L387,294.5 L388,295.1 L389,294.5 L390,294.5 L391,294.5 L392,294.5 L393,294.1 L394,294.5 L395,295.1 L396,294.5 L397,294.5 L398,294.5 L399,295.1 L400,294.1 L401,294.1 L402,294.1 L403,294.5 L404,294.5 L405,294.5 L406,294.5 L407,294.1 L408,294.1 L409,294.5 L410,294.5 L411,294.5 L412,295.1 L413,294.1 L414,294.1 L414,301.6 L413,301.6 L412,302.0 L411,302.0 L410,301.6 L409,301.0 L408,301.0 L407,301.0 L406,302.0 L405,301.0 L404,301.0 L403,301.6 L402,301.0 L401,301.0 L400,301.0 L399,301.6 L398,301.0 L397,301.0 L396,301.0 L395,302.0 L394,301.6 L393,301.6 L392,301.0 L391,301.0 L390,302.0 L389,301.0 L388,301.6 L387,301.0 L386,302.0 L385,301.0 L384,302.0 L383,301.0 L382,301.0 L381,302.0 L380,301.0 L379,301.0 L378,301.0 L377,302.0 L376,301.6 L375,301.0 L374,301.6 L373,301.0 L372,302.0 L371,302.0 L370,303.0 L369,301.0 L368,301.0 L367,301.6 L366,302.0 L365,301.0 L364,301.6 L363,301.6 L362,301.0 L361,301.6 L360,301.0 L359,302.0 L358,303.0 L357,302.0 L356,302.0 L355,301.0 L354,301.0 L353,301.0 L352,301.0 L351,302.0 L350,301.0 L349,301.6 L348,301.0 L347,302.0 L346,301.0 L345,302.0 L344,300.6 L343,300.2 L342,299.8 L341,299.4 L340,299.0 L339,299.0 L338,299.0 L337,299.0 L336,299.0 L335,299.0 L334,299.0 L333,299.0 L332,299.0 L331,299.0 ZM946,297.0 L947,297.0 L948,297.0 L949,297.0 L950,297.0 L951,297.0 L952,297.0 L953,297.0 L954,297.0 L955,297.0 L956,297.0 L957,296.0 L958,297.0 L959,297.0 L960,297.0 L961,296.0 L962,296.0 L963,297.0 L964,297.0 L965,296.0 L966,297.0 L967,296.0 L968,296.0 L969,296.0 L970,297.0 L971,297.0 L972,296.0 L973,296.0 L974,297.0 L975,296.0 L976,297.0 L977,297.0 L978,297.0 L979,297.0 L980,297.0 L981,297.0 L982,297.0 L983,296.0 L984,296.0 L985,297.0 L986,297.0 L987,297.0 L988,297.0 L989,297.0 L990,297.0 L991,297.0 L992,297.0 L993,297.0 L994,297.0 L995,297.0 L996,297.0 L997,297.0 L998,297.0 L999,297.0 L1000,297.0 L1001,297.0 L1002,297.0 L1003,297.0 L1004,297.0 L1005,297.0 L1006,297.0 L1007,297.0 L1008,297.0 L1009,297.0 L1010,297.0 L1011,297.0 L1012,297.0 L1013,297.0 L1014,297.0 L1015,297.0 L1016,297.0 L1017,297.0 L1018,297.0 L1019,297.0 L1020,297.0 L1021,297.0 L1022,297.0 L1023,297.0 L1024,297.0 L1025,297.0 L1026,297.0 L1027,297.0 L1028,297.0 L1029,297.0 L1030,297.0 L1031,297.0 L1032,297.0 L1033,297.0 L1034,297.0 L1035,297.0 L1036,297.0 L1037,297.0 L1038,297.0 L1039,297.0 L1040,297.0 L1041,297.0 L1042,297.0 L1043,297.0 L1044,297.0 L1045,297.0 L1046,297.0 L1047,297.0 L1048,297.0 L1049,297.0 L1050,297.0 L1051,297.0 L1052,297.0 L1053,297.0 L1054,297.0 L1055,297.0 L1056,297.0 L1057,297.0 L1058,297.0 L1059,297.0 L1060,297.0 L1061,297.0 L1062,297.0 L1063,297.0 L1064,297.0 L1065,297.0 L1066,297.0 L1067,296.5 L1068,296.2 L1069,295.9 L1070,295.5 L1071,295.2 L1072,294.9 L1073,294.6 L1074,294.3 L1075,293.9 L1076,293.6 L1077,293.5 L1078,293.5 L1079,292.7 L1080,293.5 L1081,294.2 L1082,293.5 L1083,292.7 L1084,293.5 L1085,292.0 L1086,293.5 L1087,293.5 L1088,294.2 L1089,293.5 L1090,293.5 L1091,292.7 L1092,292.7 L1093,294.2 L1094,294.2 L1095,293.5 L1096,293.5 L1097,293.5 L1098,293.5 L1099,294.2 L1100,293.5 L1101,292.7 L1102,293.5 L1103,292.7 L1104,294.2 L1105,292.7 L1106,292.7 L1107,294.2 L1108,293.5 L1109,293.5 L1110,293.5 L1111,293.5 L1112,292.7 L1113,293.5 L1114,293.5 L1115,293.5 L1115,301.2 L1114,301.2 L1113,302.0 L1112,301.2 L1111,302.5 L1110,301.2 L1109,302.0 L1108,302.5 L1107,301.2 L1106,301.2 L1105,302.5 L1104,301.2 L1103,302.5 L1102,301.2 L1101,301.2 L1100,302.0 L1099,302.0 L1098,302.5 L1097,301.2 L1096,302.5 L1095,302.0 L1094,301.2 L1093,302.5 L1092,302.5 L1091,302.5 L1090,301.2 L1089,301.2 L1088,301.2 L1087,302.5 L1086,302.5 L1085,302.5 L1084,302.5 L1083,302.0 L1082,301.2 L1081,302.0 L1080,301.2 L1079,301.2 L1078,302.0 L1077,302.5 L1076,300.9 L1075,300.7 L1074,300.6 L1073,300.4 L1072,300.2 L1071,300.1 L1070,299.9 L1069,299.8 L1068,299.6 L1067,299.5 L1066,299.0 L1065,299.0 L1064,299.0 L1063,299.0 L1062,299.0 L1061,299.0 L1060,299.0 L1059,299.0 L1058,299.0 L1057,299.0 L1056,299.0 L1055,299.0 L1054,299.0 L1053,299.0 L1052,299.0 L1051,299.0 L1050,299.0 L1049,299.0 L1048,299.0 L1047,299.0 L1046,299.0 L1045,299.0 L1044,299.0 L1043,299.0 L1042,299.0 L1041,299.0 L1040,299.0 L1039,299.0 L1038,299.0 L1037,299.0 L1036,299.0 L1035,299.0 L1034,299.0 L1033,299.0 L1032,299.0 L1031,299.0 L1030,299.0 L1029,299.0 L1028,299.0 L1027,299.0 L1026,299.0 L1025,299.0 L1024,299.0 L1023,299.0 L1022,299.0 L1021,299.0 L1020,299.0 L1019,299.0 L1018,299.0 L1017,299.0 L1016,299.0 L1015,299.0 L1014,299.0 L1013,299.0 L1012,299.0 L1011,299.0 L1010,299.0 L1009,299.0 L1008,299.0 L1007,299.0 L1006,299.0 L1005,299.0 L1004,299.0 L1003,299.0 L1002,299.0 L1001,299.0 L1000,299.0 L999,299.0 L998,299.0 L997,299.0 L996,299.0 L995,299.0 L994,299.0 L993,299.0 L992,299.0 L991,299.0 L990,299.0 L989,299.0 L988,299.0 L987,299.0 L986,299.0 L985,299.0 L984,299.5 L983,299.5 L982,299.0 L981,299.0 L980,299.0 L979,299.0 L978,299.0 L977,299.0 L976,299.0 L975,299.5 L974,299.0 L973,299.5 L972,299.5 L971,299.0 L970,299.0 L969,299.5 L968,299.5 L967,299.5 L966,299.0 L965,299.5 L964,299.0 L963,299.0 L962,299.5 L961,299.5 L960,299.0 L959,299.0 L958,299.0 L957,299.5 L956,299.0 L955,299.0 L954,299.0 L953,299.0 L952,299.0 L951,299.0 L950,299.0 L949,299.0 L948,299.0 L947,299.0 L946,299.0 Z" fill="#169a22" stroke="#22ea2a" stroke-width="1.1"/></svg>
<div style="left:330px;top:349px;width:1px;height:24px;background:#262626;"></div>
<div style="left:331px;top:349px;width:784px;height:24px;background:#2f2f30;"></div>
<svg style="position:absolute;left:330px;top:366px" width="10" height="8"><polygon points="0,0 0,7 7,7" fill="#3a3b3d"/><line x1="0.5" y1="0" x2="7.5" y2="7" stroke="#262626" stroke-width="1"/></svg>
<span class="t" style="left:336px;top:351.88px;font-size:11.6px;color:#dcdcdc;line-height:1">Record 6</span>
<div style="left:332px;top:361px;width:783px;height:2px;background:#22e030;"></div>
<div style="left:0px;top:385px;width:173px;height:1px;background:transparent;background:repeating-linear-gradient(90deg,#b0502a 0 1px,transparent 1px 2px)"></div>
<div style="left:173px;top:374px;width:1px;height:24px;background:#262626;"></div>
<div style="left:174px;top:374px;width:941px;height:24px;background:#6b6b6b;"></div>
<div style="left:0px;top:417px;width:173px;height:1px;background:transparent;background:repeating-linear-gradient(90deg,#b0502a 0 1px,transparent 1px 2px)"></div>
<div style="left:173px;top:399px;width:1px;height:24px;background:#262626;"></div>
<div style="left:174px;top:399px;width:941px;height:24px;background:#6b6b6b;"></div>
<div style="left:174px;top:398px;width:941px;height:1px;background:#262626;"></div>
<div style="left:173px;top:423px;width:942px;height:1px;background:#262626;"></div>
<svg style="position:absolute;left:0;top:0" width="1149" height="911"><path d="M174,386.1 L176,385.9 L178,386.0 L180,385.9 L182,385.9 L184,386.2 L186,386.2 L188,385.8 L190,386.1 L192,386.1 L194,385.7 L196,386.0 L198,385.8 L200,386.0 L202,385.9 L204,386.1 L206,385.9 L208,385.8 L210,385.9 L212,385.8 L214,385.9 L216,386.2 L218,385.8 L220,385.9 L222,386.0 L224,386.2 L226,385.8 L228,386.0 L230,385.8 L232,385.8 L234,385.8 L236,385.7 L238,386.0 L240,385.8 L242,386.0 L244,385.7 L246,385.8 L248,386.2 L250,386.1 L252,386.1 L254,385.7 L256,386.0 L258,385.9 L260,386.0 L262,385.9 L264,386.0 L266,386.0 L268,385.9 L270,385.9 L272,385.7 L274,385.9 L276,385.7 L278,385.8 L280,385.7 L282,385.9 L284,386.1 L286,385.8 L288,385.7 L290,385.7 L292,385.9 L294,385.8 L296,386.1 L298,385.8 L300,385.9 L302,386.1 L304,386.2 L306,385.8 L308,385.7 L310,386.2 L312,385.8 L314,386.0 L316,386.1 L318,386.1 L320,385.8 L322,385.8 L324,386.2 L326,385.9 L328,386.2 L330,385.8 L332,386.0 L334,385.8 L336,385.7 L338,385.9 L340,385.7 L342,386.0 L344,386.2 L346,385.9 L348,386.2 L350,386.1 L352,386.0 L354,385.9 L356,386.1 L358,384.3 L360,384.2 L362,384.9 L364,384.8 L366,384.7 L368,384.6 L370,384.8 L372,384.5 L374,385.0 L376,384.8 L378,385.4 L380,384.7 L382,384.6 L384,385.4 L386,384.8 L388,385.0 L390,384.5 L392,385.4 L394,384.2 L396,384.8 L398,385.0 L400,385.0 L402,384.7 L404,384.9 L406,385.4 L408,384.5 L410,385.2 L412,385.8 L414,386.1 L416,386.1 L418,386.0 L420,385.9 L422,386.1 L424,386.0 L426,386.0 L428,385.8 L430,386.0 L432,385.8 L434,386.1 L436,386.0 L438,385.9 L440,385.8 L442,386.0 L444,386.1 L446,386.1 L448,385.9 L450,386.1 L452,385.8 L454,385.8 L456,386.1 L458,386.1 L460,385.8 L462,385.9 L464,385.8 L466,386.0 L468,386.1 L470,386.1 L472,385.8 L474,386.1 L476,386.0 L478,386.0 L480,386.0 L482,386.0 L484,385.7 L486,386.1 L488,386.2 L490,385.7 L492,385.8 L494,385.7 L496,386.0 L498,385.7 L500,385.7 L502,386.1 L504,385.8 L506,385.8 L508,385.9 L510,385.9 L512,386.1 L514,386.0 L516,386.1 L518,386.2 L520,385.9 L522,386.1 L524,385.8 L526,386.2 L528,385.7 L530,385.9 L532,385.7 L534,385.8 L536,385.8 L538,385.9 L540,386.2 L542,385.8 L544,386.1 L546,386.1 L548,385.9 L550,385.9 L552,386.0 L554,385.7 L556,385.9 L558,386.0 L560,386.1 L562,385.8 L564,386.0 L566,385.8 L568,386.0 L570,386.1 L572,385.9 L574,385.8 L576,385.0 L578,385.0 L580,385.8 L582,384.9 L584,385.5 L586,385.3 L588,385.3 L590,385.8 L592,385.7 L594,385.7 L596,385.7 L598,385.8 L600,386.2 L602,385.9 L604,386.0 L606,386.0 L608,386.0 L610,385.9 L612,385.9 L614,386.0 L616,386.1 L618,386.0 L620,386.1 L622,385.9 L624,385.8 L626,386.0 L628,386.2 L630,386.1 L632,386.0 L634,385.9 L636,385.8 L638,386.0 L640,385.0 L642,385.3 L644,384.9 L646,384.9 L648,385.4 L650,384.9 L652,385.2 L654,384.7 L656,385.3 L658,384.8 L660,385.2 L662,384.8 L664,384.7 L666,384.9 L668,385.1 L670,385.0 L672,385.5 L674,385.6 L676,385.6 L678,385.5 L680,384.8 L682,384.8 L684,384.8 L686,385.0 L688,385.6 L690,385.1 L692,385.6 L694,384.7 L696,385.3 L698,384.8 L700,386.1 L702,386.1 L704,386.1 L706,385.9 L708,385.8 L710,386.0 L712,386.0 L714,386.0 L716,386.0 L718,386.0 L720,386.2 L722,385.9 L724,385.7 L726,386.0 L728,385.8 L730,386.1 L732,385.9 L734,385.8 L736,385.9 L738,385.9 L740,386.0 L742,385.9 L744,385.8 L746,386.1 L748,386.2 L750,385.8 L752,385.7 L754,385.9 L756,386.0 L758,385.8 L760,386.1 L762,386.1 L764,386.1 L766,385.9 L768,386.0 L770,386.1 L772,385.9 L774,385.7 L776,386.1 L778,385.8 L780,386.0 L782,385.8 L784,385.9 L786,386.1 L788,386.1 L790,386.2 L792,386.0 L794,386.0 L796,386.1 L798,386.0 L800,386.0 L802,385.8 L804,386.1 L806,385.7 L808,386.0 L810,385.9 L812,386.0 L814,385.8 L816,385.8 L818,385.9 L820,386.0 L822,385.8 L824,385.8 L826,386.0 L828,385.8 L830,385.7 L832,386.0 L834,386.1 L836,386.1 L838,385.8 L840,385.9 L842,385.7 L844,385.8 L846,386.1 L848,386.1 L850,385.8 L852,385.1 L854,385.7 L856,385.6 L858,385.3 L860,385.8 L862,385.7 L864,385.4 L866,385.9 L868,385.5 L870,385.7 L872,385.1 L874,385.4 L876,385.7 L878,385.8 L880,385.8 L882,385.7 L884,386.2 L886,385.7 L888,386.0 L890,385.8 L892,385.8 L894,386.1 L896,385.9 L898,385.9 L900,385.8 L902,386.1 L904,385.8 L906,385.7 L908,385.9 L910,385.9 L912,386.1 L914,386.0 L916,386.0 L918,385.8 L920,385.9 L922,385.9 L924,386.1 L926,385.9 L928,385.9 L930,386.1 L932,385.8 L934,385.9 L936,386.1 L938,385.7 L940,386.1 L942,386.0 L944,385.8 L946,385.9 L948,385.9 L950,385.9 L952,386.0 L954,386.0 L956,386.1 L958,386.2 L960,385.8 L962,385.8 L964,385.9 L966,385.8 L968,386.0 L970,386.1 L972,386.0 L974,385.8 L976,386.2 L978,385.9 L980,386.1 L982,385.8 L984,386.0 L986,386.0 L988,386.0 L990,385.9 L992,385.8 L994,386.0 L996,385.8 L998,386.1 L1000,385.8 L1002,385.2 L1004,385.8 L1006,385.5 L1008,385.2 L1010,385.4 L1012,385.6 L1014,385.4 L1016,385.7 L1018,385.2 L1020,385.2 L1022,385.1 L1024,385.4 L1026,385.3 L1028,385.3 L1030,385.1 L1032,385.4 L1034,385.9 L1036,385.3 L1038,385.4 L1040,386.0 L1042,386.1 L1044,385.9 L1046,386.2 L1048,385.9 L1050,385.9 L1052,386.0 L1054,385.9 L1056,385.7 L1058,385.8 L1060,386.1 L1062,385.8 L1064,385.9 L1066,386.2 L1068,386.0 L1070,386.1 L1072,386.2 L1074,385.9 L1076,385.7 L1078,386.0 L1080,385.8 L1082,385.9 L1084,386.1 L1086,385.8 L1088,385.9 L1090,385.7 L1092,385.8 L1094,385.8 L1096,386.0 L1098,385.8 L1100,385.7 L1102,385.8 L1104,386.0 L1106,385.8 L1108,386.0 L1110,386.1 L1112,386.2 L1114,386.2 L1114,387.8 L1112,387.8 L1110,387.9 L1108,388.0 L1106,388.2 L1104,388.0 L1102,388.2 L1100,388.3 L1098,388.2 L1096,388.0 L1094,388.2 L1092,388.2 L1090,388.3 L1088,388.1 L1086,388.2 L1084,387.9 L1082,388.1 L1080,388.2 L1078,388.0 L1076,388.3 L1074,388.1 L1072,387.8 L1070,387.9 L1068,388.0 L1066,387.8 L1064,388.1 L1062,388.2 L1060,387.9 L1058,388.2 L1056,388.3 L1054,388.1 L1052,388.0 L1050,388.1 L1048,388.1 L1046,387.8 L1044,388.1 L1042,387.9 L1040,388.0 L1038,388.6 L1036,388.7 L1034,388.1 L1032,388.6 L1030,388.9 L1028,388.7 L1026,388.7 L1024,388.6 L1022,388.9 L1020,388.8 L1018,388.8 L1016,388.3 L1014,388.6 L1012,388.4 L1010,388.6 L1008,388.8 L1006,388.5 L1004,388.2 L1002,388.8 L1000,388.2 L998,387.9 L996,388.2 L994,388.0 L992,388.2 L990,388.1 L988,388.0 L986,388.0 L984,388.0 L982,388.2 L980,387.9 L978,388.1 L976,387.8 L974,388.2 L972,388.0 L970,387.9 L968,388.0 L966,388.2 L964,388.1 L962,388.2 L960,388.2 L958,387.8 L956,387.9 L954,388.0 L952,388.0 L950,388.1 L948,388.1 L946,388.1 L944,388.2 L942,388.0 L940,387.9 L938,388.3 L936,387.9 L934,388.1 L932,388.2 L930,387.9 L928,388.1 L926,388.1 L924,387.9 L922,388.1 L920,388.1 L918,388.2 L916,388.0 L914,388.0 L912,387.9 L910,388.1 L908,388.1 L906,388.3 L904,388.2 L902,387.9 L900,388.2 L898,388.1 L896,388.1 L894,387.9 L892,388.2 L890,388.2 L888,388.0 L886,388.3 L884,387.8 L882,388.3 L880,388.2 L878,388.2 L876,388.3 L874,388.6 L872,388.9 L870,388.3 L868,388.5 L866,388.1 L864,388.6 L862,388.3 L860,388.2 L858,388.7 L856,388.4 L854,388.3 L852,388.9 L850,388.2 L848,387.9 L846,387.9 L844,388.2 L842,388.3 L840,388.1 L838,388.2 L836,387.9 L834,387.9 L832,388.0 L830,388.3 L828,388.2 L826,388.0 L824,388.2 L822,388.2 L820,388.0 L818,388.1 L816,388.2 L814,388.2 L812,388.0 L810,388.1 L808,388.0 L806,388.3 L804,387.9 L802,388.2 L800,388.0 L798,388.0 L796,387.9 L794,388.0 L792,388.0 L790,387.8 L788,387.9 L786,387.9 L784,388.1 L782,388.2 L780,388.0 L778,388.2 L776,387.9 L774,388.3 L772,388.1 L770,387.9 L768,388.0 L766,388.1 L764,387.9 L762,387.9 L760,387.9 L758,388.2 L756,388.0 L754,388.1 L752,388.3 L750,388.2 L748,387.8 L746,387.9 L744,388.2 L742,388.1 L740,388.0 L738,388.1 L736,388.1 L734,388.2 L732,388.1 L730,387.9 L728,388.2 L726,388.0 L724,388.3 L722,388.1 L720,387.8 L718,388.0 L716,388.0 L714,388.0 L712,388.0 L710,388.0 L708,388.2 L706,388.1 L704,387.9 L702,387.9 L700,387.9 L698,389.2 L696,388.7 L694,389.3 L692,388.4 L690,388.9 L688,388.4 L686,389.0 L684,389.2 L682,389.2 L680,389.2 L678,388.5 L676,388.4 L674,388.4 L672,388.5 L670,389.0 L668,388.9 L666,389.1 L664,389.3 L662,389.2 L660,388.8 L658,389.2 L656,388.7 L654,389.3 L652,388.8 L650,389.1 L648,388.6 L646,389.1 L644,389.1 L642,388.7 L640,389.0 L638,388.0 L636,388.2 L634,388.1 L632,388.0 L630,387.9 L628,387.8 L626,388.0 L624,388.2 L622,388.1 L620,387.9 L618,388.0 L616,387.9 L614,388.0 L612,388.1 L610,388.1 L608,388.0 L606,388.0 L604,388.0 L602,388.1 L600,387.8 L598,388.2 L596,388.3 L594,388.3 L592,388.3 L590,388.2 L588,388.7 L586,388.7 L584,388.5 L582,389.1 L580,388.2 L578,389.0 L576,389.0 L574,388.2 L572,388.1 L570,387.9 L568,388.0 L566,388.2 L564,388.0 L562,388.2 L560,387.9 L558,388.0 L556,388.1 L554,388.3 L552,388.0 L550,388.1 L548,388.1 L546,387.9 L544,387.9 L542,388.2 L540,387.8 L538,388.1 L536,388.2 L534,388.2 L532,388.3 L530,388.1 L528,388.3 L526,387.8 L524,388.2 L522,387.9 L520,388.1 L518,387.8 L516,387.9 L514,388.0 L512,387.9 L510,388.1 L508,388.1 L506,388.2 L504,388.2 L502,387.9 L500,388.3 L498,388.3 L496,388.0 L494,388.3 L492,388.2 L490,388.3 L488,387.8 L486,387.9 L484,388.3 L482,388.0 L480,388.0 L478,388.0 L476,388.0 L474,387.9 L472,388.2 L470,387.9 L468,387.9 L466,388.0 L464,388.2 L462,388.1 L460,388.2 L458,387.9 L456,387.9 L454,388.2 L452,388.2 L450,387.9 L448,388.1 L446,387.9 L444,387.9 L442,388.0 L440,388.2 L438,388.1 L436,388.0 L434,387.9 L432,388.2 L430,388.0 L428,388.2 L426,388.0 L424,388.0 L422,387.9 L420,388.1 L418,388.0 L416,387.9 L414,387.9 L412,388.2 L410,388.8 L408,389.5 L406,388.6 L404,389.1 L402,389.3 L400,389.0 L398,389.0 L396,389.2 L394,389.8 L392,388.6 L390,389.5 L388,389.0 L386,389.2 L384,388.6 L382,389.4 L380,389.3 L378,388.6 L376,389.2 L374,389.0 L372,389.5 L370,389.2 L368,389.4 L366,389.3 L364,389.2 L362,389.1 L360,389.8 L358,389.7 L356,387.9 L354,388.1 L352,388.0 L350,387.9 L348,387.8 L346,388.1 L344,387.8 L342,388.0 L340,388.3 L338,388.1 L336,388.3 L334,388.2 L332,388.0 L330,388.2 L328,387.8 L326,388.1 L324,387.8 L322,388.2 L320,388.2 L318,387.9 L316,387.9 L314,388.0 L312,388.2 L310,387.8 L308,388.3 L306,388.2 L304,387.8 L302,387.9 L300,388.1 L298,388.2 L296,387.9 L294,388.2 L292,388.1 L290,388.3 L288,388.3 L286,388.2 L284,387.9 L282,388.1 L280,388.3 L278,388.2 L276,388.3 L274,388.1 L272,388.3 L270,388.1 L268,388.1 L266,388.0 L264,388.0 L262,388.1 L260,388.0 L258,388.1 L256,388.0 L254,388.3 L252,387.9 L250,387.9 L248,387.8 L246,388.2 L244,388.3 L242,388.0 L240,388.2 L238,388.0 L236,388.3 L234,388.2 L232,388.2 L230,388.2 L228,388.0 L226,388.2 L224,387.8 L222,388.0 L220,388.1 L218,388.2 L216,387.8 L214,388.1 L212,388.2 L210,388.1 L208,388.2 L206,388.1 L204,387.9 L202,388.1 L200,388.0 L198,388.2 L196,388.0 L194,388.3 L192,387.9 L190,387.9 L188,388.2 L186,387.8 L184,387.8 L182,388.1 L180,388.1 L178,388.0 L176,388.1 L174,387.9 Z" fill="#127a12"/></svg>
<svg style="position:absolute;left:0;top:0" width="1149" height="911"><path d="M174,410.9 L176,410.8 L178,410.8 L180,410.7 L182,410.8 L184,410.7 L186,411.2 L188,411.0 L190,410.7 L192,410.9 L194,410.7 L196,411.1 L198,411.0 L200,411.1 L202,410.9 L204,410.9 L206,411.2 L208,411.1 L210,411.1 L212,410.7 L214,410.8 L216,411.1 L218,410.8 L220,411.1 L222,410.9 L224,411.1 L226,411.2 L228,410.8 L230,411.1 L232,411.1 L234,410.7 L236,410.8 L238,411.1 L240,410.7 L242,410.9 L244,410.9 L246,411.1 L248,410.7 L250,410.9 L252,410.7 L254,410.8 L256,411.1 L258,411.0 L260,411.1 L262,411.1 L264,411.2 L266,411.0 L268,410.9 L270,411.2 L272,410.9 L274,411.0 L276,411.0 L278,410.8 L280,411.0 L282,411.0 L284,411.0 L286,410.8 L288,411.2 L290,410.7 L292,411.2 L294,410.8 L296,410.8 L298,411.2 L300,410.8 L302,411.0 L304,410.9 L306,411.2 L308,411.2 L310,411.1 L312,410.7 L314,411.1 L316,410.8 L318,410.7 L320,410.7 L322,411.0 L324,411.0 L326,410.9 L328,410.8 L330,411.1 L332,410.8 L334,410.8 L336,410.8 L338,411.2 L340,410.7 L342,411.2 L344,411.0 L346,410.9 L348,410.7 L350,411.0 L352,410.7 L354,410.9 L356,411.0 L358,411.0 L360,410.3 L362,409.5 L364,410.2 L366,409.2 L368,409.9 L370,409.7 L372,409.8 L374,410.4 L376,410.4 L378,409.4 L380,411.1 L382,410.8 L384,410.7 L386,410.9 L388,410.8 L390,411.1 L392,411.0 L394,411.1 L396,410.8 L398,411.1 L400,411.0 L402,410.7 L404,410.8 L406,410.7 L408,411.0 L410,411.0 L412,410.8 L414,411.0 L416,411.1 L418,411.0 L420,411.1 L422,411.0 L424,410.7 L426,410.7 L428,410.9 L430,411.0 L432,411.0 L434,411.2 L436,411.1 L438,410.8 L440,410.8 L442,411.0 L444,410.8 L446,410.8 L448,410.9 L450,410.9 L452,410.8 L454,411.0 L456,410.8 L458,411.1 L460,411.0 L462,410.8 L464,410.9 L466,411.1 L468,410.7 L470,410.9 L472,410.9 L474,411.2 L476,410.9 L478,411.1 L480,410.9 L482,411.0 L484,410.8 L486,410.9 L488,410.8 L490,411.0 L492,410.9 L494,410.8 L496,410.8 L498,411.0 L500,410.8 L502,410.8 L504,410.9 L506,410.7 L508,410.7 L510,410.9 L512,410.9 L514,411.1 L516,410.8 L518,410.7 L520,411.0 L522,410.9 L524,410.8 L526,410.8 L528,411.1 L530,410.8 L532,410.9 L534,410.9 L536,411.0 L538,410.9 L540,410.8 L542,410.9 L544,410.8 L546,411.2 L548,411.1 L550,411.0 L552,410.9 L554,411.1 L556,410.9 L558,410.9 L560,411.2 L562,411.0 L564,411.1 L566,411.2 L568,411.1 L570,411.0 L572,411.1 L574,411.1 L576,410.5 L578,410.4 L580,410.7 L582,410.9 L584,410.7 L586,410.8 L588,410.6 L590,410.4 L592,410.4 L594,410.4 L596,410.2 L598,410.2 L600,410.9 L602,411.0 L604,411.1 L606,410.9 L608,410.9 L610,410.7 L612,410.7 L614,410.9 L616,411.0 L618,410.8 L620,411.2 L622,411.1 L624,410.9 L626,410.9 L628,411.1 L630,410.9 L632,410.8 L634,411.0 L636,411.0 L638,411.1 L640,411.1 L642,410.7 L644,411.0 L646,410.7 L648,410.7 L650,410.9 L652,411.1 L654,410.7 L656,411.0 L658,411.0 L660,411.0 L662,410.7 L664,411.0 L666,411.1 L668,411.0 L670,411.1 L672,410.9 L674,411.0 L676,411.1 L678,410.8 L680,410.8 L682,411.2 L684,410.9 L686,411.1 L688,410.7 L690,410.8 L692,411.1 L694,411.1 L696,411.1 L698,410.7 L700,410.4 L702,410.3 L704,410.3 L706,410.2 L708,410.4 L710,410.7 L712,410.5 L714,410.2 L716,410.9 L718,410.5 L720,410.1 L722,410.9 L724,410.5 L726,410.3 L728,410.5 L730,410.6 L732,410.2 L734,410.7 L736,410.9 L738,410.3 L740,410.7 L742,410.1 L744,410.5 L746,410.5 L748,410.8 L750,410.2 L752,410.7 L754,410.2 L756,410.9 L758,410.0 L760,410.7 L762,410.8 L764,411.2 L766,410.8 L768,411.1 L770,410.9 L772,410.7 L774,410.8 L776,411.1 L778,411.1 L780,410.7 L782,411.1 L784,410.9 L786,411.0 L788,411.1 L790,410.9 L792,411.2 L794,411.1 L796,411.0 L798,411.2 L800,411.2 L802,410.9 L804,410.8 L806,410.8 L808,411.1 L810,411.0 L812,411.0 L814,410.9 L816,411.0 L818,410.7 L820,411.0 L822,411.2 L824,410.9 L826,411.1 L828,410.9 L830,410.9 L832,410.7 L834,410.9 L836,410.9 L838,411.1 L840,410.9 L842,411.1 L844,410.8 L846,410.9 L848,411.1 L850,411.1 L852,411.0 L854,410.8 L856,411.1 L858,410.8 L860,410.9 L862,411.2 L864,410.9 L866,411.2 L868,411.1 L870,410.9 L872,411.1 L874,410.8 L876,411.0 L878,411.0 L880,410.8 L882,411.2 L884,410.8 L886,411.2 L888,411.1 L890,410.7 L892,410.9 L894,411.1 L896,411.1 L898,410.7 L900,410.9 L902,410.8 L904,411.1 L906,410.9 L908,411.0 L910,411.1 L912,411.0 L914,410.9 L916,411.0 L918,411.0 L920,411.1 L922,410.8 L924,410.9 L926,410.8 L928,411.0 L930,410.8 L932,410.9 L934,410.9 L936,410.9 L938,410.8 L940,411.0 L942,411.2 L944,411.2 L946,411.1 L948,411.2 L950,410.8 L952,411.0 L954,410.8 L956,411.2 L958,411.0 L960,410.8 L962,410.9 L964,411.0 L966,411.0 L968,411.2 L970,411.1 L972,411.1 L974,411.0 L976,411.0 L978,410.8 L980,411.1 L982,411.1 L984,411.1 L986,411.1 L988,411.1 L990,411.1 L992,411.0 L994,411.2 L996,410.7 L998,411.0 L1000,410.3 L1002,410.5 L1004,410.8 L1006,410.7 L1008,410.3 L1010,410.7 L1012,410.7 L1014,410.6 L1016,410.6 L1018,410.5 L1020,411.1 L1022,410.8 L1024,410.8 L1026,411.1 L1028,411.1 L1030,410.9 L1032,410.7 L1034,410.9 L1036,411.0 L1038,410.7 L1040,411.2 L1042,411.2 L1044,410.8 L1046,411.0 L1048,411.2 L1050,410.9 L1052,410.7 L1054,410.9 L1056,411.0 L1058,411.2 L1060,411.2 L1062,410.8 L1064,411.0 L1066,410.7 L1068,411.2 L1070,411.1 L1072,411.2 L1074,411.0 L1076,411.2 L1078,411.1 L1080,411.0 L1082,411.0 L1084,411.2 L1086,411.2 L1088,410.7 L1090,411.1 L1092,410.9 L1094,411.0 L1096,410.9 L1098,411.2 L1100,411.0 L1102,411.1 L1104,410.9 L1106,410.7 L1108,410.9 L1110,410.8 L1112,411.1 L1114,411.2 L1114,412.8 L1112,412.9 L1110,413.2 L1108,413.1 L1106,413.3 L1104,413.1 L1102,412.9 L1100,413.0 L1098,412.8 L1096,413.1 L1094,413.0 L1092,413.1 L1090,412.9 L1088,413.3 L1086,412.8 L1084,412.8 L1082,413.0 L1080,413.0 L1078,412.9 L1076,412.8 L1074,413.0 L1072,412.8 L1070,412.9 L1068,412.8 L1066,413.3 L1064,413.0 L1062,413.2 L1060,412.8 L1058,412.8 L1056,413.0 L1054,413.1 L1052,413.3 L1050,413.1 L1048,412.8 L1046,413.0 L1044,413.2 L1042,412.8 L1040,412.8 L1038,413.3 L1036,413.0 L1034,413.1 L1032,413.3 L1030,413.1 L1028,412.9 L1026,412.9 L1024,413.2 L1022,413.2 L1020,412.9 L1018,413.5 L1016,413.4 L1014,413.4 L1012,413.3 L1010,413.3 L1008,413.7 L1006,413.3 L1004,413.2 L1002,413.5 L1000,413.7 L998,413.0 L996,413.3 L994,412.8 L992,413.0 L990,412.9 L988,412.9 L986,412.9 L984,412.9 L982,412.9 L980,412.9 L978,413.2 L976,413.0 L974,413.0 L972,412.9 L970,412.9 L968,412.8 L966,413.0 L964,413.0 L962,413.1 L960,413.2 L958,413.0 L956,412.8 L954,413.2 L952,413.0 L950,413.2 L948,412.8 L946,412.9 L944,412.8 L942,412.8 L940,413.0 L938,413.2 L936,413.1 L934,413.1 L932,413.1 L930,413.2 L928,413.0 L926,413.2 L924,413.1 L922,413.2 L920,412.9 L918,413.0 L916,413.0 L914,413.1 L912,413.0 L910,412.9 L908,413.0 L906,413.1 L904,412.9 L902,413.2 L900,413.1 L898,413.3 L896,412.9 L894,412.9 L892,413.1 L890,413.3 L888,412.9 L886,412.8 L884,413.2 L882,412.8 L880,413.2 L878,413.0 L876,413.0 L874,413.2 L872,412.9 L870,413.1 L868,412.9 L866,412.8 L864,413.1 L862,412.8 L860,413.1 L858,413.2 L856,412.9 L854,413.2 L852,413.0 L850,412.9 L848,412.9 L846,413.1 L844,413.2 L842,412.9 L840,413.1 L838,412.9 L836,413.1 L834,413.1 L832,413.3 L830,413.1 L828,413.1 L826,412.9 L824,413.1 L822,412.8 L820,413.0 L818,413.3 L816,413.0 L814,413.1 L812,413.0 L810,413.0 L808,412.9 L806,413.2 L804,413.2 L802,413.1 L800,412.8 L798,412.8 L796,413.0 L794,412.9 L792,412.8 L790,413.1 L788,412.9 L786,413.0 L784,413.1 L782,412.9 L780,413.3 L778,412.9 L776,412.9 L774,413.2 L772,413.3 L770,413.1 L768,412.9 L766,413.2 L764,412.8 L762,413.2 L760,413.3 L758,414.0 L756,413.1 L754,413.8 L752,413.3 L750,413.8 L748,413.2 L746,413.5 L744,413.5 L742,413.9 L740,413.3 L738,413.7 L736,413.1 L734,413.3 L732,413.8 L730,413.4 L728,413.5 L726,413.7 L724,413.5 L722,413.1 L720,413.9 L718,413.5 L716,413.1 L714,413.8 L712,413.5 L710,413.3 L708,413.6 L706,413.8 L704,413.7 L702,413.7 L700,413.6 L698,413.3 L696,412.9 L694,412.9 L692,412.9 L690,413.2 L688,413.3 L686,412.9 L684,413.1 L682,412.8 L680,413.2 L678,413.2 L676,412.9 L674,413.0 L672,413.1 L670,412.9 L668,413.0 L666,412.9 L664,413.0 L662,413.3 L660,413.0 L658,413.0 L656,413.0 L654,413.3 L652,412.9 L650,413.1 L648,413.3 L646,413.3 L644,413.0 L642,413.3 L640,412.9 L638,412.9 L636,413.0 L634,413.0 L632,413.2 L630,413.1 L628,412.9 L626,413.1 L624,413.1 L622,412.9 L620,412.8 L618,413.2 L616,413.0 L614,413.1 L612,413.3 L610,413.3 L608,413.1 L606,413.1 L604,412.9 L602,413.0 L600,413.1 L598,413.8 L596,413.8 L594,413.6 L592,413.6 L590,413.6 L588,413.4 L586,413.2 L584,413.3 L582,413.1 L580,413.3 L578,413.6 L576,413.5 L574,412.9 L572,412.9 L570,413.0 L568,412.9 L566,412.8 L564,412.9 L562,413.0 L560,412.8 L558,413.1 L556,413.1 L554,412.9 L552,413.1 L550,413.0 L548,412.9 L546,412.8 L544,413.2 L542,413.1 L540,413.2 L538,413.1 L536,413.0 L534,413.1 L532,413.1 L530,413.2 L528,412.9 L526,413.2 L524,413.2 L522,413.1 L520,413.0 L518,413.3 L516,413.2 L514,412.9 L512,413.1 L510,413.1 L508,413.3 L506,413.3 L504,413.1 L502,413.2 L500,413.2 L498,413.0 L496,413.2 L494,413.2 L492,413.1 L490,413.0 L488,413.2 L486,413.1 L484,413.2 L482,413.0 L480,413.1 L478,412.9 L476,413.1 L474,412.8 L472,413.1 L470,413.1 L468,413.3 L466,412.9 L464,413.1 L462,413.2 L460,413.0 L458,412.9 L456,413.2 L454,413.0 L452,413.2 L450,413.1 L448,413.1 L446,413.2 L444,413.2 L442,413.0 L440,413.2 L438,413.2 L436,412.9 L434,412.8 L432,413.0 L430,413.0 L428,413.1 L426,413.3 L424,413.3 L422,413.0 L420,412.9 L418,413.0 L416,412.9 L414,413.0 L412,413.2 L410,413.0 L408,413.0 L406,413.3 L404,413.2 L402,413.3 L400,413.0 L398,412.9 L396,413.2 L394,412.9 L392,413.0 L390,412.9 L388,413.2 L386,413.1 L384,413.3 L382,413.2 L380,412.9 L378,414.6 L376,413.6 L374,413.6 L372,414.2 L370,414.3 L368,414.1 L366,414.8 L364,413.8 L362,414.5 L360,413.7 L358,413.0 L356,413.0 L354,413.1 L352,413.3 L350,413.0 L348,413.3 L346,413.1 L344,413.0 L342,412.8 L340,413.3 L338,412.8 L336,413.2 L334,413.2 L332,413.2 L330,412.9 L328,413.2 L326,413.1 L324,413.0 L322,413.0 L320,413.3 L318,413.3 L316,413.2 L314,412.9 L312,413.3 L310,412.9 L308,412.8 L306,412.8 L304,413.1 L302,413.0 L300,413.2 L298,412.8 L296,413.2 L294,413.2 L292,412.8 L290,413.3 L288,412.8 L286,413.2 L284,413.0 L282,413.0 L280,413.0 L278,413.2 L276,413.0 L274,413.0 L272,413.1 L270,412.8 L268,413.1 L266,413.0 L264,412.8 L262,412.9 L260,412.9 L258,413.0 L256,412.9 L254,413.2 L252,413.3 L250,413.1 L248,413.3 L246,412.9 L244,413.1 L242,413.1 L240,413.3 L238,412.9 L236,413.2 L234,413.3 L232,412.9 L230,412.9 L228,413.2 L226,412.8 L224,412.9 L222,413.1 L220,412.9 L218,413.2 L216,412.9 L214,413.2 L212,413.3 L210,412.9 L208,412.9 L206,412.8 L204,413.1 L202,413.1 L200,412.9 L198,413.0 L196,412.9 L194,413.3 L192,413.1 L190,413.3 L188,413.0 L186,412.8 L184,413.3 L182,413.2 L180,413.3 L178,413.2 L176,413.2 L174,413.1 Z" fill="#127a12"/></svg>
<span class="t" style="left:178px;top:377.38px;font-size:11.6px;color:#cfcfcf;line-height:1">Record 7</span>
<span class="t" style="left:178px;top:403.13px;font-size:11.3px;color:#cfcfcf;line-height:1">Edge143, Dobro Mike, Rec (400)</span>
<div style="left:174px;top:382px;width:941px;height:1px;background:#e02828;"></div>
<div style="left:174px;top:407px;width:941px;height:1px;background:#e02828;"></div>
<div style="left:174px;top:417px;width:941px;height:1px;background:#b45a30;"></div>
<svg style="position:absolute;left:174px;top:380px" width="5" height="6"><polygon points="0,0 3,2.5 0,5" fill="#f06060"/></svg>
<svg style="position:absolute;left:174px;top:405px" width="5" height="6"><polygon points="0,0 3,2.5 0,5" fill="#f06060"/></svg>
<div style="left:414px;top:145px;width:363px;height:738px;background:#f9f9f9;border-radius:5px;box-shadow:0 3px 8px rgba(0,0,0,0.35)"></div>
<div style="left:420px;top:276px;width:350px;height:22px;background:#f0f0f0;border-radius:4px"></div>
<span class="t m" style="left:452px;top:153.34px;color:#1a1a1a;letter-spacing:-0.22px;">Edit</span>
<svg style="position:absolute;left:755px;top:154.1px" width="8" height="11"><polyline points="1.3,1.4 5.8,5.5 1.3,9.6" fill="none" stroke="#1f1f1f" stroke-width="1.25"/></svg>
<span class="t m" style="left:452px;top:175.34px;color:#1a1a1a;letter-spacing:-0.251px;">View</span>
<svg style="position:absolute;left:755px;top:176.1px" width="8" height="11"><polyline points="1.3,1.4 5.8,5.5 1.3,9.6" fill="none" stroke="#1f1f1f" stroke-width="1.25"/></svg>
<div style="left:423px;top:196px;width:345px;height:1px;background:#e0e0e0;"></div>
<span class="t m" style="left:452px;top:206.34px;color:#1a1a1a;letter-spacing:-0.084px;">Clip Lock</span>
<svg style="position:absolute;left:755px;top:207.1px" width="8" height="11"><polyline points="1.3,1.4 5.8,5.5 1.3,9.6" fill="none" stroke="#1f1f1f" stroke-width="1.25"/></svg>
<span class="t m" style="left:452px;top:228.34px;color:#1a1a1a;letter-spacing:0.241px;">Clip Mute/Unmute</span>
<span class="t m" style="right:398px;top:228.34px;color:#1a1a1a;letter-spacing:-0.714px;">K</span>
<span class="t m" style="left:452px;top:250.34px;color:#1a1a1a;letter-spacing:-0.185px;">Isolate Clip(s) in Lane</span>
<span class="t m" style="right:398px;top:250.34px;color:#1a1a1a;letter-spacing:0.109px;">Ctrl+1</span>
<div style="left:423px;top:271px;width:345px;height:1px;background:#e0e0e0;"></div>
<span class="t m" style="left:452px;top:281.34px;color:#1a1a1a;letter-spacing:-0.456px;">Region FX</span>
<svg style="position:absolute;left:755px;top:282.1px" width="8" height="11"><polyline points="1.3,1.4 5.8,5.5 1.3,9.6" fill="none" stroke="#1f1f1f" stroke-width="1.25"/></svg>
<span class="t m" style="left:452px;top:303.34px;color:#1a1a1a;letter-spacing:0.017px;">Groove-Clip Looping</span>
<span class="t m" style="right:398px;top:303.34px;color:#1a1a1a;letter-spacing:0.109px;">Ctrl+L</span>
<div style="left:423px;top:324px;width:345px;height:1px;background:#e0e0e0;"></div>
<span class="t m" style="left:452px;top:334.34px;color:#1a1a1a;letter-spacing:-0.155px;">Insert Effect</span>
<svg style="position:absolute;left:755px;top:335.1px" width="8" height="11"><polyline points="1.3,1.4 5.8,5.5 1.3,9.6" fill="none" stroke="#1f1f1f" stroke-width="1.25"/></svg>
<span class="t m" style="left:452px;top:356.34px;color:#1a1a1a;letter-spacing:-0.31px;">Process Effect</span>
<svg style="position:absolute;left:755px;top:357.1px" width="8" height="11"><polyline points="1.3,1.4 5.8,5.5 1.3,9.6" fill="none" stroke="#1f1f1f" stroke-width="1.25"/></svg>
<span class="t m" style="left:452px;top:378.34px;color:#1a1a1a;letter-spacing:-0.36px;">Open Clip FX Rack</span>
<span class="t m" style="right:398px;top:378.34px;color:#1a1a1a;letter-spacing:0.276px;">Alt+K</span>
<span class="t m" style="left:452px;top:400.34px;color:#1a1a1a;letter-spacing:-0.198px;">Open in XSampler</span>
<div style="left:423px;top:421px;width:345px;height:1px;background:#e0e0e0;"></div>
<span class="t m" style="left:452px;top:431.34px;color:#1a1a1a;letter-spacing:-0.263px;">Rename Clip...</span>
<div style="left:423px;top:452px;width:345px;height:1px;background:#e0e0e0;"></div>
<span class="t m" style="left:452px;top:462.34px;color:#1a1a1a;letter-spacing:-0.245px;">Split...</span>
<span class="t m" style="left:452px;top:484.34px;color:#a2a2a2;letter-spacing:-0.098px;">Split Clip(s) at AudioSnap Pool</span>
<span class="t m" style="left:452px;top:506.34px;color:#a2a2a2;letter-spacing:-0.071px;">Quantize to Pool</span>
<span class="t m" style="left:452px;top:528.34px;color:#1a1a1a;letter-spacing:0.208px;">Apply Trimming</span>
<span class="t m" style="left:452px;top:550.34px;color:#1a1a1a;letter-spacing:-0.085px;">Bounce to Clip(s)</span>
<span class="t m" style="left:452px;top:572.34px;color:#1a1a1a;letter-spacing:-0.145px;">Convert to Stereo</span>
<span class="t m" style="left:452px;top:594.34px;color:#1a1a1a;letter-spacing:-0.172px;">Duplicate Selected Clip(s)</span>
<span class="t m" style="right:398px;top:594.34px;color:#1a1a1a;letter-spacing:0.109px;">Ctrl+D</span>
<div style="left:423px;top:615px;width:345px;height:1px;background:#e0e0e0;"></div>
<span class="t m" style="left:452px;top:625.34px;color:#a2a2a2;letter-spacing:-0.073px;">Unlink...</span>
<span class="t m" style="left:452px;top:647.34px;color:#a2a2a2;letter-spacing:-0.221px;">Unlink Step Sequencer Clips</span>
<span class="t m" style="left:452px;top:669.34px;color:#a2a2a2;letter-spacing:-0.169px;">Convert MIDI Clip(s) to Step Sequencer</span>
<span class="t m" style="left:452px;top:691.34px;color:#1a1a1a;letter-spacing:-0.166px;">Create Selection Group from Selected Clips</span>
<span class="t m" style="left:452px;top:713.34px;color:#1a1a1a;letter-spacing:-0.189px;">Remove Selected Clips from Groups</span>
<span class="t m" style="left:452px;top:735.34px;color:#a2a2a2;letter-spacing:-0.149px;">Select All Siblings</span>
<div style="left:423px;top:756px;width:345px;height:1px;background:#e0e0e0;"></div>
<span class="t m" style="left:452px;top:766.34px;color:#1a1a1a;letter-spacing:-0.101px;">Set Snap Offset to Now Time</span>
<span class="t m" style="left:452px;top:788.34px;color:#1a1a1a;letter-spacing:-0.08px;">Revert to Original Time Stamp</span>
<div style="left:423px;top:809px;width:345px;height:1px;background:#e0e0e0;"></div>
<span class="t m" style="left:452px;top:819.34px;color:#1a1a1a;letter-spacing:0.135px;">Import Audio...</span>
<span class="t m" style="left:452px;top:841.34px;color:#a2a2a2;letter-spacing:-0.02px;">Import MIDI...</span>
<span class="t m" style="left:452px;top:863.34px;color:#1a1a1a;letter-spacing:-0.178px;">Associated Audio Files...</span>
<span class="t m" style="right:398px;top:863.34px;color:#1a1a1a;letter-spacing:0.038px;">Shift+K</span>
<div style="left:772px;top:273px;width:175px;height:103px;background:#f9f9f9;border-radius:5px;box-shadow:0 3px 8px rgba(0,0,0,0.35)"></div>
<div style="left:777px;top:307px;width:164px;height:22px;background:#f0f0f0;border-radius:4px"></div>
<span class="t m" style="left:809px;top:281.34px;color:#1a1a1a;letter-spacing:-0.405px;">VocalSync</span>
<svg style="position:absolute;left:925px;top:282.1px" width="8" height="11"><polyline points="1.3,1.4 5.8,5.5 1.3,9.6" fill="none" stroke="#1f1f1f" stroke-width="1.25"/></svg>
<span class="t m" style="left:809px;top:312.34px;color:#1a1a1a;letter-spacing:-0.272px;">Prism</span>
<svg style="position:absolute;left:925px;top:313.1px" width="8" height="11"><polyline points="1.3,1.4 5.8,5.5 1.3,9.6" fill="none" stroke="#1f1f1f" stroke-width="1.25"/></svg>
<span class="t m" style="left:809px;top:334.34px;color:#1a1a1a;letter-spacing:0.096px;">Melodyne</span>
<svg style="position:absolute;left:925px;top:335.1px" width="8" height="11"><polyline points="1.3,1.4 5.8,5.5 1.3,9.6" fill="none" stroke="#1f1f1f" stroke-width="1.25"/></svg>
<span class="t m" style="left:809px;top:356.34px;color:#1a1a1a;letter-spacing:-0.238px;">Drum Replacer</span>
<svg style="position:absolute;left:925px;top:357.1px" width="8" height="11"><polyline points="1.3,1.4 5.8,5.5 1.3,9.6" fill="none" stroke="#1f1f1f" stroke-width="1.25"/></svg>
<div style="left:780px;top:302px;width:158px;height:1px;background:#e0e0e0;"></div>
<div style="left:941px;top:304px;width:201px;height:178px;background:#f9f9f9;border-radius:5px;box-shadow:0 3px 8px rgba(0,0,0,0.35)"></div>
<div style="left:947px;top:307px;width:189px;height:22px;background:#f0f0f0;border-radius:4px"></div>
<span class="t m" style="left:979px;top:312.34px;color:#1a1a1a;letter-spacing:-0.384px;">Create Region FX</span>
<span class="t m" style="left:979px;top:334.34px;color:#a2a2a2;letter-spacing:-0.376px;">Remove Region FX</span>
<span class="t m" style="left:979px;top:356.34px;color:#a2a2a2;letter-spacing:-0.122px;">Open Editor</span>
<span class="t m" style="left:979px;top:387.34px;color:#a2a2a2;letter-spacing:-0.418px;">Render Region FX</span>
<span class="t m" style="left:979px;top:409.34px;color:#a2a2a2;letter-spacing:-0.474px;">Bypass Region FX</span>
<span class="t m" style="left:979px;top:431.34px;color:#a2a2a2;letter-spacing:0.04px;">Follow Host Tempo</span>
<span class="t m" style="left:979px;top:462.34px;color:#a2a2a2;letter-spacing:-0.25px;">Copy MIDI Events</span>
<div style="left:950px;top:377px;width:183px;height:1px;background:#e0e0e0;"></div>
<div style="left:950px;top:452px;width:183px;height:1px;background:#e0e0e0;"></div>
<div style="left:0px;top:883px;width:1149px;height:1px;background:#2f4a30;"></div>
<div style="left:-40px;top:892px;width:211px;height:50px;background:#f1f3f0;border-radius:20px"></div>
<span class="t" style="left:-1px;top:899.5px;font-size:13px;color:#3a3a3a;line-height:16px">earch</span>
<svg style="position:absolute;left:118px;top:893px" width="50" height="18">
<rect x="11" y="1" width="3" height="3" fill="#d8b050"/><ellipse cx="12.5" cy="13" rx="8" ry="6" fill="#e07890"/><ellipse cx="12.5" cy="13" rx="4.5" ry="4" fill="#e8c030"/>
<rect x="26" y="5" width="3" height="3" fill="#d8b050"/><circle cx="27.5" cy="15" r="6.5" fill="#2a9a4a"/>
<rect x="39" y="1" width="3" height="3" fill="#d8b050"/><ellipse cx="40.5" cy="12" rx="4.5" ry="8" fill="#d83a30"/><path d="M36 9 L45 6 M36 14 L45 11 M36 19 L45 16" stroke="#f0c040" stroke-width="1.6"/>
</svg>
<svg style="position:absolute;left:185px;top:895px" width="25" height="16">
<path d="M0 2 Q0 1 1 1 H8 L10 3 H24 V16 H0 Z" fill="#e8a818"/><rect x="0" y="4" width="24" height="12" fill="#f8d04a"/><rect x="6" y="13" width="12" height="3" fill="#8a9a7a"/></svg>
<svg style="position:absolute;left:229px;top:895px" width="25" height="16">
<circle cx="12" cy="12" r="12" fill="#f2c230"/><path d="M12 12 L1.6 6 A12 12 0 0 1 22.4 6 Z" fill="#dd4433"/><path d="M12 12 L1.6 6 A12 12 0 0 0 6 22.4 Z" fill="#2a9a48"/>
<circle cx="12" cy="12" r="5.5" fill="#fff"/><circle cx="12" cy="12" r="4.3" fill="#3b7ae8"/></svg>
<svg style="position:absolute;left:273px;top:895px" width="25" height="16">
<circle cx="12" cy="12" r="10" fill="#8a8e96"/><rect x="9" y="0" width="6" height="5" fill="#8a8e96"/><rect x="1" y="4" width="5" height="5" fill="#8a8e96" transform="rotate(-30 3.5 6.5)"/><rect x="18" y="4" width="5" height="5" fill="#8a8e96" transform="rotate(30 20.5 6.5)"/>
<circle cx="12" cy="12" r="5" fill="#f0f0f0"/><circle cx="12" cy="12" r="3.8" fill="#2060b8"/></svg>
<div style="left:317px;top:895px;width:24px;height:20px;background:#3f6ef2;border-radius:3px"></div>
<svg style="position:absolute;left:317px;top:895px" width="24" height="16"><path d="M7 7 L12 16 L17 7" fill="none" stroke="#fff" stroke-width="3.2"/></svg>
<svg style="position:absolute;left:363px;top:895px" width="22" height="16"><path d="M1 1 H14 L19 6 V16 H1 Z" fill="#f4f4f4"/><path d="M14 1 L19 1 L19 6 Z" fill="#8a8a8a"/></svg>
<svg style="position:absolute;left:405px;top:895px" width="22" height="16"><path d="M11 1 L19 16 H3 Z" fill="#f08a10"/><path d="M7.2 8 H14.8 L15.6 10 H6.4 Z M5.2 12 H16.8 L17.6 14 H4.4 Z" fill="#e8e8e8"/></svg>
<svg style="position:absolute;left:451px;top:895px" width="22" height="16"><rect x="1" y="1" width="19" height="16" rx="2" fill="#9aa0a8"/><rect x="3" y="3" width="15" height="4" fill="#40c8f0"/>
<rect x="3" y="9" width="4" height="3" fill="#e0e0e0"/><rect x="8.5" y="9" width="4" height="3" fill="#e0e0e0"/><rect x="14" y="9" width="4" height="3" fill="#e0e0e0"/><rect x="3" y="13.5" width="4" height="3" fill="#e0e0e0"/><rect x="8.5" y="13.5" width="4" height="3" fill="#e0e0e0"/><rect x="14" y="13.5" width="4" height="3" fill="#2060c0"/></svg>
<svg style="position:absolute;left:493px;top:895px" width="24" height="16"><circle cx="12" cy="12" r="11" fill="#302e31" stroke="#d8d8d8" stroke-width="1"/><circle cx="12" cy="12" r="3" fill="none" stroke="#d8d8d8" stroke-width="1.5"/><path d="M6 10 Q9 5 14 6 M18 12 Q17 17 12 18" stroke="#d8d8d8" stroke-width="1.8" fill="none"/></svg>
<span class="t" style="left:536px;top:897px;font-size:20px;color:#1a78e0;font-weight:bold;font-family:'Liberation Serif',serif;line-height:20px;letter-spacing:-1px">M</span>
<div style="left:581px;top:897px;width:22px;height:16px;background:#1a1a1a;border:1px solid #9a9a9a;border-bottom:none"></div>
<span class="t" style="left:585px;top:901px;font-size:6px;color:#d0d0d0;line-height:7px">C:\&gt;_</span>
<svg style="position:absolute;left:625px;top:895px" width="24" height="16"><rect x="0" y="0" width="24" height="16" fill="#2a2a2a"/><rect x="7" y="12" width="3" height="3" fill="#e0e0e0"/><rect x="12" y="8" width="3" height="3" fill="#e0e0e0"/><rect x="12" y="12" width="3" height="3" fill="#e0e0e0"/></svg>
<div style="left:670px;top:896px;width:23px;height:15px;background:#000"></div>
<span class="t" style="left:669px;top:898px;font-size:14px;color:#fff;font-weight:bold;font-family:'Liberation Serif',serif;line-height:15px;letter-spacing:-1px">SSL</span>
<div style="left:713px;top:895px;width:24px;height:16px;background:linear-gradient(#6a6a6a,#2a2a2a 40%,#1a1a1a)"></div>
<span class="t" style="left:714px;top:901px;font-size:8px;color:#f0f0f0;font-weight:bold;line-height:9px">iLOK</span>
<div style="left:758px;top:897px;width:20px;height:20px;background:#f4f4f4;border-radius:50%"></div>
<span class="t" style="left:762px;top:900px;font-size:11px;color:#222;line-height:12px;letter-spacing:-2px">&#187;X</span>
<svg style="position:absolute;left:802px;top:898px" width="22" height="14"><rect x="0" y="0" width="22" height="14" fill="#2a2c3a"/><circle cx="11" cy="13" r="7" fill="#5a90c8"/></svg>
<span class="t" style="left:805px;top:899px;font-size:6px;color:#b0b0b0;line-height:6px">0100</span>
<div style="left:838px;top:887px;width:38px;height:30px;background:#3a5238;border-radius:4px"></div>
<svg style="position:absolute;left:845px;top:894px" width="24" height="17"><circle cx="12" cy="12" r="10" fill="none" stroke="#f08a30" stroke-width="3"/><path d="M12 12 L19 6" stroke="#f08a30" stroke-width="3"/><circle cx="12" cy="12" r="2.6" fill="#f08a30"/></svg>
<svg style="position:absolute;left:1083px;top:901px" width="14" height="10"><polyline points="2,8 7,3 12,8" fill="none" stroke="#e8e8e8" stroke-width="1.4"/></svg>
<svg style="position:absolute;left:1110px;top:900px" width="22" height="11"><circle cx="9" cy="9" r="7" fill="#d8d8d8"/><circle cx="14" cy="12" r="5.5" fill="#1a6ad0"/><rect x="13.3" y="9" width="1.4" height="1.4" fill="#fff"/><rect x="13.3" y="11" width="1.4" height="3" fill="#fff"/></svg></body></html>
